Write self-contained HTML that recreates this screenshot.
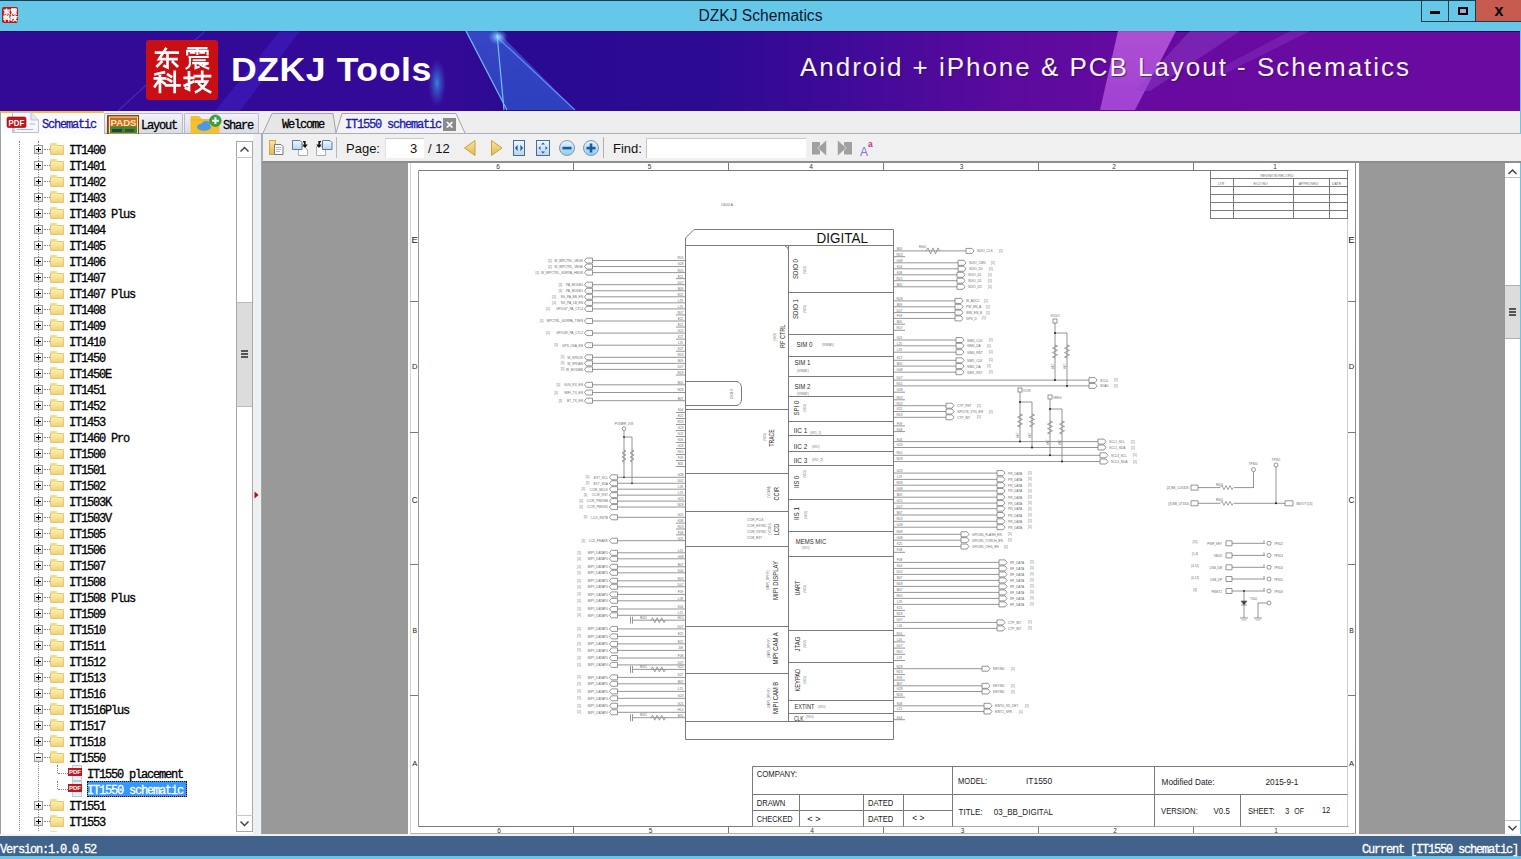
<!DOCTYPE html><html><head><meta charset="utf-8"><style>
*{margin:0;padding:0;box-sizing:border-box}
html,body{width:1521px;height:859px;overflow:hidden;background:#65c8e8;font-family:"Liberation Sans",sans-serif;position:relative}
.a{position:absolute}
.mono{font-family:"Liberation Mono",monospace;font-size:12px;-webkit-text-stroke:0.3px currentColor;letter-spacing:-1.2px;line-height:16px;color:#000;white-space:pre}
</style></head><body>
<div class="a" style="left:0;top:0;width:1521px;height:1px;background:#1d3b48"></div>
<div class="a" style="left:0;top:7px;width:1521px;text-align:center;font-size:15.6px;line-height:18px;color:#0a1830">DZKJ Schematics</div>
<div class="a" style="left:1421px;top:0;width:28px;height:22px;border:1px solid #1d3b48;border-top:0"></div>
<div class="a" style="left:1449px;top:0;width:27px;height:22px;border:1px solid #1d3b48;border-top:0;border-left:0"></div>
<div class="a" style="left:1476px;top:0;width:45px;height:22px;background:#c75b4f;border-bottom:1px solid #1d3b48"></div>
<div class="a" style="left:1430px;top:11px;width:10px;height:3px;background:#000"></div>
<div class="a" style="left:1458px;top:7px;width:10px;height:8px;border:2px solid #000;background:#9ad"></div>
<div class="a" style="left:1489px;top:1px;width:20px;font-size:16px;font-weight:bold;line-height:20px;text-align:center;color:#000">x</div>
<svg class="a" style="left:2px;top:7px" width="16" height="16"><rect x="0" y="0" width="16" height="16" rx="2" fill="#c01818"/><path transform="translate(1.20,1.50) scale(0.3,0.26)" d="M3,6 H21 M11,2 L5.5,13 H20 M12.5,9 V22 L10,20.5 M7.5,16 L4,20.5 M17,16 L20.5,20.5" stroke="#fff" stroke-width="1.30" vector-effect="non-scaling-stroke" fill="none" stroke-linecap="square"/><path transform="translate(8.20,1.50) scale(0.3,0.26)" d="M4.5,1.2 H19.5 M12,1.2 V7.5 M3.5,4.2 V8 M3.5,4.2 H20.5 V8 M6.5,6.2 H9.5 M14.5,6.2 H17.5 M5.5,10.8 H20.5 M5.8,10.8 V18.5 Q5.5,21.5 3,23 M9,14.2 H18 M8.5,17.4 H20.5 M10.5,17.4 V22.8 L13,21.5 M13.5,18 Q16.5,21.5 21,23 M17.5,19.5 L20.5,18" stroke="#fff" stroke-width="1.04" vector-effect="non-scaling-stroke" fill="none" stroke-linecap="square"/><path transform="translate(1.20,8.00) scale(0.3,0.26)" d="M2.5,4 L9.5,2 M2,8.5 H10.5 M6.2,3 V23 M6,9.5 L2,17 M6.5,10.5 L10,14 M13,4.5 L15.5,6.5 M13,9.5 L15.5,11.5 M11.5,16 H22.5 M18.5,1.5 V23" stroke="#fff" stroke-width="1.30" vector-effect="non-scaling-stroke" fill="none" stroke-linecap="square"/><path transform="translate(8.20,8.00) scale(0.3,0.26)" d="M1.5,8 H8.5 M5,2 V20.5 L2.5,19 M1.5,16 L8.5,12 M10,6 H22.5 M16,1.5 V11 M11,12 H20 Q17,19 11,23 M13.5,14.5 Q17,20 22.5,23" stroke="#fff" stroke-width="1.30" vector-effect="non-scaling-stroke" fill="none" stroke-linecap="square"/></svg>
<div class="a" style="left:0;top:31px;width:1520px;height:80px;overflow:hidden;background:linear-gradient(90deg,#330a96 0%,#330a97 29%,#2b0a93 34%,#2c0a92 46%,#3e0a98 55%,#5a0a9e 66%,#680aa0 76%,#6a0aa0 100%)">
<svg width="1520" height="80" style="position:absolute;left:0;top:0">
<defs>
<linearGradient id="ray1" x1="0" x2="0" y1="0" y2="1"><stop offset="0" stop-color="#3a6ae0"/><stop offset="1" stop-color="#3060d8"/></linearGradient>
<radialGradient id="glow1"><stop offset="0" stop-color="#9ff0ff" stop-opacity="0.9"/><stop offset="1" stop-color="#60a0ff" stop-opacity="0"/></radialGradient>
<radialGradient id="glow2"><stop offset="0" stop-color="#3aa0e8" stop-opacity="0.8"/><stop offset="1" stop-color="#3a60e0" stop-opacity="0"/></radialGradient>
<linearGradient id="ray2" x1="0" x2="0" y1="0" y2="1"><stop offset="0" stop-color="#c060e0"/><stop offset="1" stop-color="#b050e0"/></linearGradient>
</defs>
<rect x="0" y="0" width="1520" height="1" fill="#180858"/>
<polyline points="118,80 205,0" stroke="#5a4ae0" stroke-width="1.2" opacity="0.45" fill="none"/>
<polygon points="215,80 280,0 300,0 240,80" fill="#4a2ae0" opacity="0.35"/>
<polygon points="466,0 497,0 575,79 508,79" fill="url(#ray1)" opacity="0.62"/>
<polyline points="466,0 507,79" stroke="#70b8ff" stroke-width="1.3" fill="none"/>
<polyline points="497,3 504,79" stroke="#70c0ff" stroke-width="1.2" fill="none"/>
<polyline points="497,6 575,79" stroke="#6a8cff" stroke-width="1.1" fill="none"/>
<ellipse cx="498" cy="6" rx="10" ry="8" fill="url(#glow1)"/>
<ellipse cx="437" cy="52" rx="9" ry="24" fill="url(#glow2)"/>
<polygon points="1118,0 1176,0 1135,79 1100,79" fill="url(#ray2)" opacity="0.8"/>
<polygon points="1190,0 1240,0 1150,60 1135,60" fill="#9040c8" opacity="0.45"/>
<polygon points="1290,0 1310,0 1220,45 1205,45" fill="#9040c8" opacity="0.35"/>
</svg>
<svg class="a" style="left:146px;top:9px" width="72" height="60"><rect x="0" y="0" width="72" height="60" rx="3" fill="#c90f14"/><path transform="translate(6.50,7.00) scale(1.2,0.93)" d="M3,6 H21 M11,2 L5.5,13 H20 M12.5,9 V22 L10,20.5 M7.5,16 L4,20.5 M17,16 L20.5,20.5" stroke="#fff" stroke-width="2.70" vector-effect="non-scaling-stroke" fill="none" stroke-linecap="square"/><path transform="translate(37.00,7.00) scale(1.2,0.93)" d="M4.5,1.2 H19.5 M12,1.2 V7.5 M3.5,4.2 V8 M3.5,4.2 H20.5 V8 M6.5,6.2 H9.5 M14.5,6.2 H17.5 M5.5,10.8 H20.5 M5.8,10.8 V18.5 Q5.5,21.5 3,23 M9,14.2 H18 M8.5,17.4 H20.5 M10.5,17.4 V22.8 L13,21.5 M13.5,18 Q16.5,21.5 21,23 M17.5,19.5 L20.5,18" stroke="#fff" stroke-width="2.16" vector-effect="non-scaling-stroke" fill="none" stroke-linecap="square"/><path transform="translate(6.50,30.50) scale(1.2,0.93)" d="M2.5,4 L9.5,2 M2,8.5 H10.5 M6.2,3 V23 M6,9.5 L2,17 M6.5,10.5 L10,14 M13,4.5 L15.5,6.5 M13,9.5 L15.5,11.5 M11.5,16 H22.5 M18.5,1.5 V23" stroke="#fff" stroke-width="2.70" vector-effect="non-scaling-stroke" fill="none" stroke-linecap="square"/><path transform="translate(37.00,30.50) scale(1.2,0.93)" d="M1.5,8 H8.5 M5,2 V20.5 L2.5,19 M1.5,16 L8.5,12 M10,6 H22.5 M16,1.5 V11 M11,12 H20 Q17,19 11,23 M13.5,14.5 Q17,20 22.5,23" stroke="#fff" stroke-width="2.70" vector-effect="non-scaling-stroke" fill="none" stroke-linecap="square"/></svg>
<div class="a" style="left:230.5px;top:21px;font-size:33px;font-weight:bold;color:#fff;line-height:36px;letter-spacing:0.5px;transform:scaleX(1.08);transform-origin:0 0">DZKJ Tools</div>
<div class="a" style="left:800px;top:20px;font-size:26px;color:#f6f2ff;line-height:32px;letter-spacing:1.97px;text-shadow:1px 1px 1px rgba(40,20,70,0.7)">Android + iPhone &amp; PCB Layout - Schematics</div>
</div>
<div class="a" style="left:0;top:111px;width:1520px;height:22px;background:#eeeeee"></div>
<div class="a" style="left:0;top:133px;width:1520px;height:1px;background:#a8b0bc"></div>
<div class="a" style="left:0;top:111px;width:104px;height:23px;background:#fbfbfd;border-top:2px solid #f3bf3f;border-left:1px solid #9aa"></div>
<div class="a mono" style="left:42px;top:117px;color:#1a1aa0">Schematic</div>
<div class="a" style="left:104px;top:113px;width:79px;height:20px;background:linear-gradient(#f2f3f7,#d9dce6);border:1px solid #b8bcc8;border-bottom:0;border-radius:2px 2px 0 0"></div>
<div class="a mono" style="left:141px;top:118px">Layout</div>
<div class="a" style="left:184px;top:113px;width:75px;height:20px;background:linear-gradient(#f2f3f7,#d9dce6);border:1px solid #b8bcc8;border-bottom:0;border-radius:2px 2px 0 0"></div>
<div class="a mono" style="left:223px;top:118px">Share</div>
<svg class="a" style="left:0;top:110px" width="262" height="24">
<path d="M12.5,2.5 H31 L38.5,10 V22.5 H12.5 Z" fill="#f4f8fc" stroke="#b8c4d0"/>
<path d="M31,2.5 V10 H38.5" fill="#e0e8f0" stroke="#b8c4d0"/>
<path d="M17,19.5 H33 M30,14 H35 M14,22 V12" stroke="#a8bccc" stroke-width="1.2"/>
<rect x="7" y="7" width="19" height="10.5" rx="1.5" fill="#c4141c" stroke="#8a0a10" stroke-width="0.6"/>
<text x="8.6" y="15.6" font-size="8.6" font-weight="bold" fill="#fff" font-family="Liberation Sans" textLength="15.6" lengthAdjust="spacingAndGlyphs">PDF</text>
<rect x="107.5" y="5.5" width="31" height="18" fill="#b0561a" stroke="#8a4010"/>
<rect x="109.5" y="7" width="28" height="16" fill="#c86a22" stroke="#f6e2a8" stroke-width="1"/>
<text x="110.5" y="15.5" font-size="9" font-weight="bold" fill="#fbe8b0" font-family="Liberation Sans" textLength="26" lengthAdjust="spacingAndGlyphs">PADS</text>
<rect x="110" y="16.5" width="27" height="6.5" fill="#3c8a30"/>
<rect x="112" y="19" width="10" height="3" fill="#244"/><rect x="125" y="19" width="9" height="3" fill="#353"/>
<path d="M190.5,6 H199 L202,9 H219.5 V23.5 H190.5 Z" fill="#f7be2e"/>
<path d="M190.5,10 H219.5" stroke="#f0b020" stroke-width="1"/>
<ellipse cx="204" cy="17" rx="7" ry="3.8" fill="#4a9ae6"/><ellipse cx="206" cy="14.2" rx="4" ry="3.3" fill="#4a9ae6"/>
<circle cx="215.4" cy="10.7" r="5.8" fill="#3aa040" stroke="#2a8030" stroke-width="0.6"/>
<path d="M215.4,7.3 V14.1 M212,10.7 H218.8" stroke="#fff" stroke-width="2"/>
</svg>
<svg class="a" style="left:262px;top:111px" width="220" height="23">
<path d="M1,22 L10,2.5 L71,2.5 L74,22" fill="#e6e6e6" stroke="#a0a4ac"/>
<path d="M74,22 L80,2.5 L194,2.5 L203,22" fill="#f3f3f3" stroke="#a0a4ac"/>
</svg>
<div class="a mono" style="left:282px;top:117px">Welcome</div>
<div class="a mono" style="left:345px;top:117px;color:#1a1ab0">IT1550 schematic</div>
<div class="a" style="left:443px;top:118px;width:13px;height:13px;background:#8a8a8a;color:#fff;font-size:13px;line-height:13px;text-align:center;font-weight:bold">&#215;</div>
<div class="a" style="left:0;top:134px;width:262px;height:702px;background:#fff;border-left:1px solid #9aa0a8"></div>
<div class="a" style="left:253px;top:134px;width:8px;height:702px;background:#eef0f2"></div>
<div class="a" style="left:261px;top:134px;width:1px;height:702px;background:#a0a8b0"></div>
<div class="a" style="left:0;top:134px;width:236px;height:698px;overflow:hidden">
<div class="a" style="left:19px;top:7px;width:1px;height:700px;border-left:1px dotted #808080"></div>
<div class="a" style="left:38px;top:7px;width:1px;height:700px;border-left:1px dotted #808080"></div>
<div class="a" style="left:34px;top:11px;width:9px;height:9px;border:1px solid #9a9a9a;background:linear-gradient(#fff,#ddd)"></div>
<div class="a" style="left:36px;top:15px;width:5px;height:1px;background:#000"></div>
<div class="a" style="left:38px;top:13px;width:1px;height:5px;background:#000"></div>
<div class="a" style="left:44px;top:15px;width:6px;height:1px;border-top:1px dotted #808080"></div>
<div class="a" style="left:50px;top:11px;width:14px;height:10px;background:linear-gradient(#faeeb0,#f2d478);border:1px solid #e8c468;border-radius:1px"></div>
<div class="a" style="left:50px;top:9px;width:7px;height:3px;background:#f3dc90;border-radius:1px 1px 0 0"></div>
<div class="a mono" style="left:69px;top:9px">IT1400</div>
<div class="a" style="left:34px;top:27px;width:9px;height:9px;border:1px solid #9a9a9a;background:linear-gradient(#fff,#ddd)"></div>
<div class="a" style="left:36px;top:31px;width:5px;height:1px;background:#000"></div>
<div class="a" style="left:38px;top:29px;width:1px;height:5px;background:#000"></div>
<div class="a" style="left:44px;top:31px;width:6px;height:1px;border-top:1px dotted #808080"></div>
<div class="a" style="left:50px;top:27px;width:14px;height:10px;background:linear-gradient(#faeeb0,#f2d478);border:1px solid #e8c468;border-radius:1px"></div>
<div class="a" style="left:50px;top:25px;width:7px;height:3px;background:#f3dc90;border-radius:1px 1px 0 0"></div>
<div class="a mono" style="left:69px;top:25px">IT1401</div>
<div class="a" style="left:34px;top:43px;width:9px;height:9px;border:1px solid #9a9a9a;background:linear-gradient(#fff,#ddd)"></div>
<div class="a" style="left:36px;top:47px;width:5px;height:1px;background:#000"></div>
<div class="a" style="left:38px;top:45px;width:1px;height:5px;background:#000"></div>
<div class="a" style="left:44px;top:47px;width:6px;height:1px;border-top:1px dotted #808080"></div>
<div class="a" style="left:50px;top:43px;width:14px;height:10px;background:linear-gradient(#faeeb0,#f2d478);border:1px solid #e8c468;border-radius:1px"></div>
<div class="a" style="left:50px;top:41px;width:7px;height:3px;background:#f3dc90;border-radius:1px 1px 0 0"></div>
<div class="a mono" style="left:69px;top:41px">IT1402</div>
<div class="a" style="left:34px;top:59px;width:9px;height:9px;border:1px solid #9a9a9a;background:linear-gradient(#fff,#ddd)"></div>
<div class="a" style="left:36px;top:63px;width:5px;height:1px;background:#000"></div>
<div class="a" style="left:38px;top:61px;width:1px;height:5px;background:#000"></div>
<div class="a" style="left:44px;top:63px;width:6px;height:1px;border-top:1px dotted #808080"></div>
<div class="a" style="left:50px;top:59px;width:14px;height:10px;background:linear-gradient(#faeeb0,#f2d478);border:1px solid #e8c468;border-radius:1px"></div>
<div class="a" style="left:50px;top:57px;width:7px;height:3px;background:#f3dc90;border-radius:1px 1px 0 0"></div>
<div class="a mono" style="left:69px;top:57px">IT1403</div>
<div class="a" style="left:34px;top:75px;width:9px;height:9px;border:1px solid #9a9a9a;background:linear-gradient(#fff,#ddd)"></div>
<div class="a" style="left:36px;top:79px;width:5px;height:1px;background:#000"></div>
<div class="a" style="left:38px;top:77px;width:1px;height:5px;background:#000"></div>
<div class="a" style="left:44px;top:79px;width:6px;height:1px;border-top:1px dotted #808080"></div>
<div class="a" style="left:50px;top:75px;width:14px;height:10px;background:linear-gradient(#faeeb0,#f2d478);border:1px solid #e8c468;border-radius:1px"></div>
<div class="a" style="left:50px;top:73px;width:7px;height:3px;background:#f3dc90;border-radius:1px 1px 0 0"></div>
<div class="a mono" style="left:69px;top:73px">IT1403 Plus</div>
<div class="a" style="left:34px;top:91px;width:9px;height:9px;border:1px solid #9a9a9a;background:linear-gradient(#fff,#ddd)"></div>
<div class="a" style="left:36px;top:95px;width:5px;height:1px;background:#000"></div>
<div class="a" style="left:38px;top:93px;width:1px;height:5px;background:#000"></div>
<div class="a" style="left:44px;top:95px;width:6px;height:1px;border-top:1px dotted #808080"></div>
<div class="a" style="left:50px;top:91px;width:14px;height:10px;background:linear-gradient(#faeeb0,#f2d478);border:1px solid #e8c468;border-radius:1px"></div>
<div class="a" style="left:50px;top:89px;width:7px;height:3px;background:#f3dc90;border-radius:1px 1px 0 0"></div>
<div class="a mono" style="left:69px;top:89px">IT1404</div>
<div class="a" style="left:34px;top:107px;width:9px;height:9px;border:1px solid #9a9a9a;background:linear-gradient(#fff,#ddd)"></div>
<div class="a" style="left:36px;top:111px;width:5px;height:1px;background:#000"></div>
<div class="a" style="left:38px;top:109px;width:1px;height:5px;background:#000"></div>
<div class="a" style="left:44px;top:111px;width:6px;height:1px;border-top:1px dotted #808080"></div>
<div class="a" style="left:50px;top:107px;width:14px;height:10px;background:linear-gradient(#faeeb0,#f2d478);border:1px solid #e8c468;border-radius:1px"></div>
<div class="a" style="left:50px;top:105px;width:7px;height:3px;background:#f3dc90;border-radius:1px 1px 0 0"></div>
<div class="a mono" style="left:69px;top:105px">IT1405</div>
<div class="a" style="left:34px;top:123px;width:9px;height:9px;border:1px solid #9a9a9a;background:linear-gradient(#fff,#ddd)"></div>
<div class="a" style="left:36px;top:127px;width:5px;height:1px;background:#000"></div>
<div class="a" style="left:38px;top:125px;width:1px;height:5px;background:#000"></div>
<div class="a" style="left:44px;top:127px;width:6px;height:1px;border-top:1px dotted #808080"></div>
<div class="a" style="left:50px;top:123px;width:14px;height:10px;background:linear-gradient(#faeeb0,#f2d478);border:1px solid #e8c468;border-radius:1px"></div>
<div class="a" style="left:50px;top:121px;width:7px;height:3px;background:#f3dc90;border-radius:1px 1px 0 0"></div>
<div class="a mono" style="left:69px;top:121px">IT1406</div>
<div class="a" style="left:34px;top:139px;width:9px;height:9px;border:1px solid #9a9a9a;background:linear-gradient(#fff,#ddd)"></div>
<div class="a" style="left:36px;top:143px;width:5px;height:1px;background:#000"></div>
<div class="a" style="left:38px;top:141px;width:1px;height:5px;background:#000"></div>
<div class="a" style="left:44px;top:143px;width:6px;height:1px;border-top:1px dotted #808080"></div>
<div class="a" style="left:50px;top:139px;width:14px;height:10px;background:linear-gradient(#faeeb0,#f2d478);border:1px solid #e8c468;border-radius:1px"></div>
<div class="a" style="left:50px;top:137px;width:7px;height:3px;background:#f3dc90;border-radius:1px 1px 0 0"></div>
<div class="a mono" style="left:69px;top:137px">IT1407</div>
<div class="a" style="left:34px;top:155px;width:9px;height:9px;border:1px solid #9a9a9a;background:linear-gradient(#fff,#ddd)"></div>
<div class="a" style="left:36px;top:159px;width:5px;height:1px;background:#000"></div>
<div class="a" style="left:38px;top:157px;width:1px;height:5px;background:#000"></div>
<div class="a" style="left:44px;top:159px;width:6px;height:1px;border-top:1px dotted #808080"></div>
<div class="a" style="left:50px;top:155px;width:14px;height:10px;background:linear-gradient(#faeeb0,#f2d478);border:1px solid #e8c468;border-radius:1px"></div>
<div class="a" style="left:50px;top:153px;width:7px;height:3px;background:#f3dc90;border-radius:1px 1px 0 0"></div>
<div class="a mono" style="left:69px;top:153px">IT1407 Plus</div>
<div class="a" style="left:34px;top:171px;width:9px;height:9px;border:1px solid #9a9a9a;background:linear-gradient(#fff,#ddd)"></div>
<div class="a" style="left:36px;top:175px;width:5px;height:1px;background:#000"></div>
<div class="a" style="left:38px;top:173px;width:1px;height:5px;background:#000"></div>
<div class="a" style="left:44px;top:175px;width:6px;height:1px;border-top:1px dotted #808080"></div>
<div class="a" style="left:50px;top:171px;width:14px;height:10px;background:linear-gradient(#faeeb0,#f2d478);border:1px solid #e8c468;border-radius:1px"></div>
<div class="a" style="left:50px;top:169px;width:7px;height:3px;background:#f3dc90;border-radius:1px 1px 0 0"></div>
<div class="a mono" style="left:69px;top:169px">IT1408</div>
<div class="a" style="left:34px;top:187px;width:9px;height:9px;border:1px solid #9a9a9a;background:linear-gradient(#fff,#ddd)"></div>
<div class="a" style="left:36px;top:191px;width:5px;height:1px;background:#000"></div>
<div class="a" style="left:38px;top:189px;width:1px;height:5px;background:#000"></div>
<div class="a" style="left:44px;top:191px;width:6px;height:1px;border-top:1px dotted #808080"></div>
<div class="a" style="left:50px;top:187px;width:14px;height:10px;background:linear-gradient(#faeeb0,#f2d478);border:1px solid #e8c468;border-radius:1px"></div>
<div class="a" style="left:50px;top:185px;width:7px;height:3px;background:#f3dc90;border-radius:1px 1px 0 0"></div>
<div class="a mono" style="left:69px;top:185px">IT1409</div>
<div class="a" style="left:34px;top:203px;width:9px;height:9px;border:1px solid #9a9a9a;background:linear-gradient(#fff,#ddd)"></div>
<div class="a" style="left:36px;top:207px;width:5px;height:1px;background:#000"></div>
<div class="a" style="left:38px;top:205px;width:1px;height:5px;background:#000"></div>
<div class="a" style="left:44px;top:207px;width:6px;height:1px;border-top:1px dotted #808080"></div>
<div class="a" style="left:50px;top:203px;width:14px;height:10px;background:linear-gradient(#faeeb0,#f2d478);border:1px solid #e8c468;border-radius:1px"></div>
<div class="a" style="left:50px;top:201px;width:7px;height:3px;background:#f3dc90;border-radius:1px 1px 0 0"></div>
<div class="a mono" style="left:69px;top:201px">IT1410</div>
<div class="a" style="left:34px;top:219px;width:9px;height:9px;border:1px solid #9a9a9a;background:linear-gradient(#fff,#ddd)"></div>
<div class="a" style="left:36px;top:223px;width:5px;height:1px;background:#000"></div>
<div class="a" style="left:38px;top:221px;width:1px;height:5px;background:#000"></div>
<div class="a" style="left:44px;top:223px;width:6px;height:1px;border-top:1px dotted #808080"></div>
<div class="a" style="left:50px;top:219px;width:14px;height:10px;background:linear-gradient(#faeeb0,#f2d478);border:1px solid #e8c468;border-radius:1px"></div>
<div class="a" style="left:50px;top:217px;width:7px;height:3px;background:#f3dc90;border-radius:1px 1px 0 0"></div>
<div class="a mono" style="left:69px;top:217px">IT1450</div>
<div class="a" style="left:34px;top:235px;width:9px;height:9px;border:1px solid #9a9a9a;background:linear-gradient(#fff,#ddd)"></div>
<div class="a" style="left:36px;top:239px;width:5px;height:1px;background:#000"></div>
<div class="a" style="left:38px;top:237px;width:1px;height:5px;background:#000"></div>
<div class="a" style="left:44px;top:239px;width:6px;height:1px;border-top:1px dotted #808080"></div>
<div class="a" style="left:50px;top:235px;width:14px;height:10px;background:linear-gradient(#faeeb0,#f2d478);border:1px solid #e8c468;border-radius:1px"></div>
<div class="a" style="left:50px;top:233px;width:7px;height:3px;background:#f3dc90;border-radius:1px 1px 0 0"></div>
<div class="a mono" style="left:69px;top:233px">IT1450E</div>
<div class="a" style="left:34px;top:251px;width:9px;height:9px;border:1px solid #9a9a9a;background:linear-gradient(#fff,#ddd)"></div>
<div class="a" style="left:36px;top:255px;width:5px;height:1px;background:#000"></div>
<div class="a" style="left:38px;top:253px;width:1px;height:5px;background:#000"></div>
<div class="a" style="left:44px;top:255px;width:6px;height:1px;border-top:1px dotted #808080"></div>
<div class="a" style="left:50px;top:251px;width:14px;height:10px;background:linear-gradient(#faeeb0,#f2d478);border:1px solid #e8c468;border-radius:1px"></div>
<div class="a" style="left:50px;top:249px;width:7px;height:3px;background:#f3dc90;border-radius:1px 1px 0 0"></div>
<div class="a mono" style="left:69px;top:249px">IT1451</div>
<div class="a" style="left:34px;top:267px;width:9px;height:9px;border:1px solid #9a9a9a;background:linear-gradient(#fff,#ddd)"></div>
<div class="a" style="left:36px;top:271px;width:5px;height:1px;background:#000"></div>
<div class="a" style="left:38px;top:269px;width:1px;height:5px;background:#000"></div>
<div class="a" style="left:44px;top:271px;width:6px;height:1px;border-top:1px dotted #808080"></div>
<div class="a" style="left:50px;top:267px;width:14px;height:10px;background:linear-gradient(#faeeb0,#f2d478);border:1px solid #e8c468;border-radius:1px"></div>
<div class="a" style="left:50px;top:265px;width:7px;height:3px;background:#f3dc90;border-radius:1px 1px 0 0"></div>
<div class="a mono" style="left:69px;top:265px">IT1452</div>
<div class="a" style="left:34px;top:283px;width:9px;height:9px;border:1px solid #9a9a9a;background:linear-gradient(#fff,#ddd)"></div>
<div class="a" style="left:36px;top:287px;width:5px;height:1px;background:#000"></div>
<div class="a" style="left:38px;top:285px;width:1px;height:5px;background:#000"></div>
<div class="a" style="left:44px;top:287px;width:6px;height:1px;border-top:1px dotted #808080"></div>
<div class="a" style="left:50px;top:283px;width:14px;height:10px;background:linear-gradient(#faeeb0,#f2d478);border:1px solid #e8c468;border-radius:1px"></div>
<div class="a" style="left:50px;top:281px;width:7px;height:3px;background:#f3dc90;border-radius:1px 1px 0 0"></div>
<div class="a mono" style="left:69px;top:281px">IT1453</div>
<div class="a" style="left:34px;top:299px;width:9px;height:9px;border:1px solid #9a9a9a;background:linear-gradient(#fff,#ddd)"></div>
<div class="a" style="left:36px;top:303px;width:5px;height:1px;background:#000"></div>
<div class="a" style="left:38px;top:301px;width:1px;height:5px;background:#000"></div>
<div class="a" style="left:44px;top:303px;width:6px;height:1px;border-top:1px dotted #808080"></div>
<div class="a" style="left:50px;top:299px;width:14px;height:10px;background:linear-gradient(#faeeb0,#f2d478);border:1px solid #e8c468;border-radius:1px"></div>
<div class="a" style="left:50px;top:297px;width:7px;height:3px;background:#f3dc90;border-radius:1px 1px 0 0"></div>
<div class="a mono" style="left:69px;top:297px">IT1460 Pro</div>
<div class="a" style="left:34px;top:315px;width:9px;height:9px;border:1px solid #9a9a9a;background:linear-gradient(#fff,#ddd)"></div>
<div class="a" style="left:36px;top:319px;width:5px;height:1px;background:#000"></div>
<div class="a" style="left:38px;top:317px;width:1px;height:5px;background:#000"></div>
<div class="a" style="left:44px;top:319px;width:6px;height:1px;border-top:1px dotted #808080"></div>
<div class="a" style="left:50px;top:315px;width:14px;height:10px;background:linear-gradient(#faeeb0,#f2d478);border:1px solid #e8c468;border-radius:1px"></div>
<div class="a" style="left:50px;top:313px;width:7px;height:3px;background:#f3dc90;border-radius:1px 1px 0 0"></div>
<div class="a mono" style="left:69px;top:313px">IT1500</div>
<div class="a" style="left:34px;top:331px;width:9px;height:9px;border:1px solid #9a9a9a;background:linear-gradient(#fff,#ddd)"></div>
<div class="a" style="left:36px;top:335px;width:5px;height:1px;background:#000"></div>
<div class="a" style="left:38px;top:333px;width:1px;height:5px;background:#000"></div>
<div class="a" style="left:44px;top:335px;width:6px;height:1px;border-top:1px dotted #808080"></div>
<div class="a" style="left:50px;top:331px;width:14px;height:10px;background:linear-gradient(#faeeb0,#f2d478);border:1px solid #e8c468;border-radius:1px"></div>
<div class="a" style="left:50px;top:329px;width:7px;height:3px;background:#f3dc90;border-radius:1px 1px 0 0"></div>
<div class="a mono" style="left:69px;top:329px">IT1501</div>
<div class="a" style="left:34px;top:347px;width:9px;height:9px;border:1px solid #9a9a9a;background:linear-gradient(#fff,#ddd)"></div>
<div class="a" style="left:36px;top:351px;width:5px;height:1px;background:#000"></div>
<div class="a" style="left:38px;top:349px;width:1px;height:5px;background:#000"></div>
<div class="a" style="left:44px;top:351px;width:6px;height:1px;border-top:1px dotted #808080"></div>
<div class="a" style="left:50px;top:347px;width:14px;height:10px;background:linear-gradient(#faeeb0,#f2d478);border:1px solid #e8c468;border-radius:1px"></div>
<div class="a" style="left:50px;top:345px;width:7px;height:3px;background:#f3dc90;border-radius:1px 1px 0 0"></div>
<div class="a mono" style="left:69px;top:345px">IT1502</div>
<div class="a" style="left:34px;top:363px;width:9px;height:9px;border:1px solid #9a9a9a;background:linear-gradient(#fff,#ddd)"></div>
<div class="a" style="left:36px;top:367px;width:5px;height:1px;background:#000"></div>
<div class="a" style="left:38px;top:365px;width:1px;height:5px;background:#000"></div>
<div class="a" style="left:44px;top:367px;width:6px;height:1px;border-top:1px dotted #808080"></div>
<div class="a" style="left:50px;top:363px;width:14px;height:10px;background:linear-gradient(#faeeb0,#f2d478);border:1px solid #e8c468;border-radius:1px"></div>
<div class="a" style="left:50px;top:361px;width:7px;height:3px;background:#f3dc90;border-radius:1px 1px 0 0"></div>
<div class="a mono" style="left:69px;top:361px">IT1503K</div>
<div class="a" style="left:34px;top:379px;width:9px;height:9px;border:1px solid #9a9a9a;background:linear-gradient(#fff,#ddd)"></div>
<div class="a" style="left:36px;top:383px;width:5px;height:1px;background:#000"></div>
<div class="a" style="left:38px;top:381px;width:1px;height:5px;background:#000"></div>
<div class="a" style="left:44px;top:383px;width:6px;height:1px;border-top:1px dotted #808080"></div>
<div class="a" style="left:50px;top:379px;width:14px;height:10px;background:linear-gradient(#faeeb0,#f2d478);border:1px solid #e8c468;border-radius:1px"></div>
<div class="a" style="left:50px;top:377px;width:7px;height:3px;background:#f3dc90;border-radius:1px 1px 0 0"></div>
<div class="a mono" style="left:69px;top:377px">IT1503V</div>
<div class="a" style="left:34px;top:395px;width:9px;height:9px;border:1px solid #9a9a9a;background:linear-gradient(#fff,#ddd)"></div>
<div class="a" style="left:36px;top:399px;width:5px;height:1px;background:#000"></div>
<div class="a" style="left:38px;top:397px;width:1px;height:5px;background:#000"></div>
<div class="a" style="left:44px;top:399px;width:6px;height:1px;border-top:1px dotted #808080"></div>
<div class="a" style="left:50px;top:395px;width:14px;height:10px;background:linear-gradient(#faeeb0,#f2d478);border:1px solid #e8c468;border-radius:1px"></div>
<div class="a" style="left:50px;top:393px;width:7px;height:3px;background:#f3dc90;border-radius:1px 1px 0 0"></div>
<div class="a mono" style="left:69px;top:393px">IT1505</div>
<div class="a" style="left:34px;top:411px;width:9px;height:9px;border:1px solid #9a9a9a;background:linear-gradient(#fff,#ddd)"></div>
<div class="a" style="left:36px;top:415px;width:5px;height:1px;background:#000"></div>
<div class="a" style="left:38px;top:413px;width:1px;height:5px;background:#000"></div>
<div class="a" style="left:44px;top:415px;width:6px;height:1px;border-top:1px dotted #808080"></div>
<div class="a" style="left:50px;top:411px;width:14px;height:10px;background:linear-gradient(#faeeb0,#f2d478);border:1px solid #e8c468;border-radius:1px"></div>
<div class="a" style="left:50px;top:409px;width:7px;height:3px;background:#f3dc90;border-radius:1px 1px 0 0"></div>
<div class="a mono" style="left:69px;top:409px">IT1506</div>
<div class="a" style="left:34px;top:427px;width:9px;height:9px;border:1px solid #9a9a9a;background:linear-gradient(#fff,#ddd)"></div>
<div class="a" style="left:36px;top:431px;width:5px;height:1px;background:#000"></div>
<div class="a" style="left:38px;top:429px;width:1px;height:5px;background:#000"></div>
<div class="a" style="left:44px;top:431px;width:6px;height:1px;border-top:1px dotted #808080"></div>
<div class="a" style="left:50px;top:427px;width:14px;height:10px;background:linear-gradient(#faeeb0,#f2d478);border:1px solid #e8c468;border-radius:1px"></div>
<div class="a" style="left:50px;top:425px;width:7px;height:3px;background:#f3dc90;border-radius:1px 1px 0 0"></div>
<div class="a mono" style="left:69px;top:425px">IT1507</div>
<div class="a" style="left:34px;top:443px;width:9px;height:9px;border:1px solid #9a9a9a;background:linear-gradient(#fff,#ddd)"></div>
<div class="a" style="left:36px;top:447px;width:5px;height:1px;background:#000"></div>
<div class="a" style="left:38px;top:445px;width:1px;height:5px;background:#000"></div>
<div class="a" style="left:44px;top:447px;width:6px;height:1px;border-top:1px dotted #808080"></div>
<div class="a" style="left:50px;top:443px;width:14px;height:10px;background:linear-gradient(#faeeb0,#f2d478);border:1px solid #e8c468;border-radius:1px"></div>
<div class="a" style="left:50px;top:441px;width:7px;height:3px;background:#f3dc90;border-radius:1px 1px 0 0"></div>
<div class="a mono" style="left:69px;top:441px">IT1508</div>
<div class="a" style="left:34px;top:459px;width:9px;height:9px;border:1px solid #9a9a9a;background:linear-gradient(#fff,#ddd)"></div>
<div class="a" style="left:36px;top:463px;width:5px;height:1px;background:#000"></div>
<div class="a" style="left:38px;top:461px;width:1px;height:5px;background:#000"></div>
<div class="a" style="left:44px;top:463px;width:6px;height:1px;border-top:1px dotted #808080"></div>
<div class="a" style="left:50px;top:459px;width:14px;height:10px;background:linear-gradient(#faeeb0,#f2d478);border:1px solid #e8c468;border-radius:1px"></div>
<div class="a" style="left:50px;top:457px;width:7px;height:3px;background:#f3dc90;border-radius:1px 1px 0 0"></div>
<div class="a mono" style="left:69px;top:457px">IT1508 Plus</div>
<div class="a" style="left:34px;top:475px;width:9px;height:9px;border:1px solid #9a9a9a;background:linear-gradient(#fff,#ddd)"></div>
<div class="a" style="left:36px;top:479px;width:5px;height:1px;background:#000"></div>
<div class="a" style="left:38px;top:477px;width:1px;height:5px;background:#000"></div>
<div class="a" style="left:44px;top:479px;width:6px;height:1px;border-top:1px dotted #808080"></div>
<div class="a" style="left:50px;top:475px;width:14px;height:10px;background:linear-gradient(#faeeb0,#f2d478);border:1px solid #e8c468;border-radius:1px"></div>
<div class="a" style="left:50px;top:473px;width:7px;height:3px;background:#f3dc90;border-radius:1px 1px 0 0"></div>
<div class="a mono" style="left:69px;top:473px">IT1509</div>
<div class="a" style="left:34px;top:491px;width:9px;height:9px;border:1px solid #9a9a9a;background:linear-gradient(#fff,#ddd)"></div>
<div class="a" style="left:36px;top:495px;width:5px;height:1px;background:#000"></div>
<div class="a" style="left:38px;top:493px;width:1px;height:5px;background:#000"></div>
<div class="a" style="left:44px;top:495px;width:6px;height:1px;border-top:1px dotted #808080"></div>
<div class="a" style="left:50px;top:491px;width:14px;height:10px;background:linear-gradient(#faeeb0,#f2d478);border:1px solid #e8c468;border-radius:1px"></div>
<div class="a" style="left:50px;top:489px;width:7px;height:3px;background:#f3dc90;border-radius:1px 1px 0 0"></div>
<div class="a mono" style="left:69px;top:489px">IT1510</div>
<div class="a" style="left:34px;top:507px;width:9px;height:9px;border:1px solid #9a9a9a;background:linear-gradient(#fff,#ddd)"></div>
<div class="a" style="left:36px;top:511px;width:5px;height:1px;background:#000"></div>
<div class="a" style="left:38px;top:509px;width:1px;height:5px;background:#000"></div>
<div class="a" style="left:44px;top:511px;width:6px;height:1px;border-top:1px dotted #808080"></div>
<div class="a" style="left:50px;top:507px;width:14px;height:10px;background:linear-gradient(#faeeb0,#f2d478);border:1px solid #e8c468;border-radius:1px"></div>
<div class="a" style="left:50px;top:505px;width:7px;height:3px;background:#f3dc90;border-radius:1px 1px 0 0"></div>
<div class="a mono" style="left:69px;top:505px">IT1511</div>
<div class="a" style="left:34px;top:523px;width:9px;height:9px;border:1px solid #9a9a9a;background:linear-gradient(#fff,#ddd)"></div>
<div class="a" style="left:36px;top:527px;width:5px;height:1px;background:#000"></div>
<div class="a" style="left:38px;top:525px;width:1px;height:5px;background:#000"></div>
<div class="a" style="left:44px;top:527px;width:6px;height:1px;border-top:1px dotted #808080"></div>
<div class="a" style="left:50px;top:523px;width:14px;height:10px;background:linear-gradient(#faeeb0,#f2d478);border:1px solid #e8c468;border-radius:1px"></div>
<div class="a" style="left:50px;top:521px;width:7px;height:3px;background:#f3dc90;border-radius:1px 1px 0 0"></div>
<div class="a mono" style="left:69px;top:521px">IT1512</div>
<div class="a" style="left:34px;top:539px;width:9px;height:9px;border:1px solid #9a9a9a;background:linear-gradient(#fff,#ddd)"></div>
<div class="a" style="left:36px;top:543px;width:5px;height:1px;background:#000"></div>
<div class="a" style="left:38px;top:541px;width:1px;height:5px;background:#000"></div>
<div class="a" style="left:44px;top:543px;width:6px;height:1px;border-top:1px dotted #808080"></div>
<div class="a" style="left:50px;top:539px;width:14px;height:10px;background:linear-gradient(#faeeb0,#f2d478);border:1px solid #e8c468;border-radius:1px"></div>
<div class="a" style="left:50px;top:537px;width:7px;height:3px;background:#f3dc90;border-radius:1px 1px 0 0"></div>
<div class="a mono" style="left:69px;top:537px">IT1513</div>
<div class="a" style="left:34px;top:555px;width:9px;height:9px;border:1px solid #9a9a9a;background:linear-gradient(#fff,#ddd)"></div>
<div class="a" style="left:36px;top:559px;width:5px;height:1px;background:#000"></div>
<div class="a" style="left:38px;top:557px;width:1px;height:5px;background:#000"></div>
<div class="a" style="left:44px;top:559px;width:6px;height:1px;border-top:1px dotted #808080"></div>
<div class="a" style="left:50px;top:555px;width:14px;height:10px;background:linear-gradient(#faeeb0,#f2d478);border:1px solid #e8c468;border-radius:1px"></div>
<div class="a" style="left:50px;top:553px;width:7px;height:3px;background:#f3dc90;border-radius:1px 1px 0 0"></div>
<div class="a mono" style="left:69px;top:553px">IT1516</div>
<div class="a" style="left:34px;top:571px;width:9px;height:9px;border:1px solid #9a9a9a;background:linear-gradient(#fff,#ddd)"></div>
<div class="a" style="left:36px;top:575px;width:5px;height:1px;background:#000"></div>
<div class="a" style="left:38px;top:573px;width:1px;height:5px;background:#000"></div>
<div class="a" style="left:44px;top:575px;width:6px;height:1px;border-top:1px dotted #808080"></div>
<div class="a" style="left:50px;top:571px;width:14px;height:10px;background:linear-gradient(#faeeb0,#f2d478);border:1px solid #e8c468;border-radius:1px"></div>
<div class="a" style="left:50px;top:569px;width:7px;height:3px;background:#f3dc90;border-radius:1px 1px 0 0"></div>
<div class="a mono" style="left:69px;top:569px">IT1516Plus</div>
<div class="a" style="left:34px;top:587px;width:9px;height:9px;border:1px solid #9a9a9a;background:linear-gradient(#fff,#ddd)"></div>
<div class="a" style="left:36px;top:591px;width:5px;height:1px;background:#000"></div>
<div class="a" style="left:38px;top:589px;width:1px;height:5px;background:#000"></div>
<div class="a" style="left:44px;top:591px;width:6px;height:1px;border-top:1px dotted #808080"></div>
<div class="a" style="left:50px;top:587px;width:14px;height:10px;background:linear-gradient(#faeeb0,#f2d478);border:1px solid #e8c468;border-radius:1px"></div>
<div class="a" style="left:50px;top:585px;width:7px;height:3px;background:#f3dc90;border-radius:1px 1px 0 0"></div>
<div class="a mono" style="left:69px;top:585px">IT1517</div>
<div class="a" style="left:34px;top:603px;width:9px;height:9px;border:1px solid #9a9a9a;background:linear-gradient(#fff,#ddd)"></div>
<div class="a" style="left:36px;top:607px;width:5px;height:1px;background:#000"></div>
<div class="a" style="left:38px;top:605px;width:1px;height:5px;background:#000"></div>
<div class="a" style="left:44px;top:607px;width:6px;height:1px;border-top:1px dotted #808080"></div>
<div class="a" style="left:50px;top:603px;width:14px;height:10px;background:linear-gradient(#faeeb0,#f2d478);border:1px solid #e8c468;border-radius:1px"></div>
<div class="a" style="left:50px;top:601px;width:7px;height:3px;background:#f3dc90;border-radius:1px 1px 0 0"></div>
<div class="a mono" style="left:69px;top:601px">IT1518</div>
<div class="a" style="left:34px;top:619px;width:9px;height:9px;border:1px solid #9a9a9a;background:linear-gradient(#fff,#ddd)"></div>
<div class="a" style="left:36px;top:623px;width:5px;height:1px;background:#000"></div>
<div class="a" style="left:44px;top:623px;width:6px;height:1px;border-top:1px dotted #808080"></div>
<div class="a" style="left:50px;top:619px;width:14px;height:10px;background:linear-gradient(#faeeb0,#f2d478);border:1px solid #e8c468;border-radius:1px"></div>
<div class="a" style="left:50px;top:617px;width:7px;height:3px;background:#f3dc90;border-radius:1px 1px 0 0"></div>
<div class="a mono" style="left:69px;top:617px">IT1550</div>
<div class="a" style="left:57px;top:631px;width:1px;height:8px;border-left:1px dotted #808080"></div>
<div class="a" style="left:58px;top:639px;width:10px;height:1px;border-top:1px dotted #808080"></div>
<div class="a" style="left:72px;top:631px;width:10px;height:16px;background:#e8eef6;border:1px solid #c0c8d0"></div>
<div class="a" style="left:68px;top:634px;width:14px;height:8px;background:#c01820;color:#fff;font-size:6px;font-weight:bold;line-height:8px;text-align:center">PDF</div>
<div class="a mono" style="left:87px;top:633px">IT1550 placement</div>
<div class="a" style="left:57px;top:647px;width:1px;height:8px;border-left:1px dotted #808080"></div>
<div class="a" style="left:58px;top:655px;width:10px;height:1px;border-top:1px dotted #808080"></div>
<div class="a" style="left:72px;top:647px;width:10px;height:16px;background:#e8eef6;border:1px solid #c0c8d0"></div>
<div class="a" style="left:68px;top:650px;width:14px;height:8px;background:#c01820;color:#fff;font-size:6px;font-weight:bold;line-height:8px;text-align:center">PDF</div>
<div class="a" style="left:87px;top:647px;width:100px;height:16px;background:#3399ff;border:1px dotted #000"></div>
<div class="a mono" style="left:87px;top:649px;color:#fff">IT1550 schematic</div>
<div class="a" style="left:34px;top:667px;width:9px;height:9px;border:1px solid #9a9a9a;background:linear-gradient(#fff,#ddd)"></div>
<div class="a" style="left:36px;top:671px;width:5px;height:1px;background:#000"></div>
<div class="a" style="left:38px;top:669px;width:1px;height:5px;background:#000"></div>
<div class="a" style="left:44px;top:671px;width:6px;height:1px;border-top:1px dotted #808080"></div>
<div class="a" style="left:50px;top:667px;width:14px;height:10px;background:linear-gradient(#faeeb0,#f2d478);border:1px solid #e8c468;border-radius:1px"></div>
<div class="a" style="left:50px;top:665px;width:7px;height:3px;background:#f3dc90;border-radius:1px 1px 0 0"></div>
<div class="a mono" style="left:69px;top:665px">IT1551</div>
<div class="a" style="left:34px;top:683px;width:9px;height:9px;border:1px solid #9a9a9a;background:linear-gradient(#fff,#ddd)"></div>
<div class="a" style="left:36px;top:687px;width:5px;height:1px;background:#000"></div>
<div class="a" style="left:38px;top:685px;width:1px;height:5px;background:#000"></div>
<div class="a" style="left:44px;top:687px;width:6px;height:1px;border-top:1px dotted #808080"></div>
<div class="a" style="left:50px;top:683px;width:14px;height:10px;background:linear-gradient(#faeeb0,#f2d478);border:1px solid #e8c468;border-radius:1px"></div>
<div class="a" style="left:50px;top:681px;width:7px;height:3px;background:#f3dc90;border-radius:1px 1px 0 0"></div>
<div class="a mono" style="left:69px;top:681px">IT1553</div>
<div class="a" style="left:34px;top:699px;width:9px;height:9px;border:1px solid #9a9a9a;background:linear-gradient(#fff,#ddd)"></div>
<div class="a" style="left:36px;top:703px;width:5px;height:1px;background:#000"></div>
<div class="a" style="left:38px;top:701px;width:1px;height:5px;background:#000"></div>
<div class="a" style="left:44px;top:703px;width:6px;height:1px;border-top:1px dotted #808080"></div>
<div class="a" style="left:50px;top:699px;width:14px;height:10px;background:linear-gradient(#faeeb0,#f2d478);border:1px solid #e8c468;border-radius:1px"></div>
<div class="a" style="left:50px;top:697px;width:7px;height:3px;background:#f3dc90;border-radius:1px 1px 0 0"></div>
<div class="a mono" style="left:69px;top:697px">IT1555</div>
</div>
<div class="a" style="left:236px;top:141px;width:17px;height:691px;background:#fff;border:1px solid #a8a8a8"></div>
<div class="a" style="left:236px;top:157px;width:17px;height:1px;background:#c8c8c8"></div>
<div class="a" style="left:236px;top:815px;width:17px;height:1px;background:#c8c8c8"></div>
<div class="a" style="left:237px;top:302px;width:15px;height:105px;background:#dcdcdc;border-top:1px solid #bbb;border-bottom:1px solid #bbb"></div>
<div class="a" style="left:241px;top:350px;width:7px;height:2px;background:#555"></div>
<div class="a" style="left:241px;top:353px;width:7px;height:2px;background:#555"></div>
<div class="a" style="left:241px;top:356px;width:7px;height:2px;background:#555"></div>
<svg class="a" style="left:236px;top:141px" width="17" height="17"><path d="M4.5,10.5 L8.5,6.5 L12.5,10.5" fill="none" stroke="#444" stroke-width="1.5"/></svg>
<svg class="a" style="left:236px;top:815px" width="17" height="17"><path d="M4.5,6.5 L8.5,10.5 L12.5,6.5" fill="none" stroke="#444" stroke-width="1.5"/></svg>
<svg class="a" style="left:253px;top:490px" width="8" height="10"><path d="M1.5,1.5 L5.5,5 L1.5,8.5Z" fill="#a81010"/></svg>
<div class="a" style="left:262px;top:134px;width:1259px;height:27px;background:#f0f0f0"></div>
<div class="a" style="left:262px;top:161px;width:1259px;height:2px;background:#8e8e8e"></div>
<div class="a" style="left:262px;top:134px;width:1px;height:28px;background:#b0b0b0"></div>
<svg class="a" style="left:0;top:0" width="1521" height="170">
<defs>
<linearGradient id="tg" x1="0" x2="0" y1="0" y2="1"><stop offset="0" stop-color="#f8e6a0"/><stop offset="1" stop-color="#e0b850"/></linearGradient>
<linearGradient id="bp" x1="0" x2="0" y1="0" y2="1"><stop offset="0" stop-color="#f0f8ff"/><stop offset="1" stop-color="#b8d4ee"/></linearGradient>
<linearGradient id="zb" x1="0" x2="0" y1="0" y2="1"><stop offset="0" stop-color="#e6f4fe"/><stop offset="1" stop-color="#8ccaf4"/></linearGradient>
</defs>
<rect x="269.5" y="140.5" width="6" height="14" fill="url(#tg)" stroke="#d0a850"/>
<path d="M274.5,144.5 H281 L283,146.5 V154.5 H274.5 Z" fill="#fff" stroke="#707880"/>
<path d="M276,147.5 H281 M276,149.5 H281 M276,151.5 H280" stroke="#9ab" stroke-width="0.8"/>
<path d="M298.5,146.5 H304 L307.5,150 V155.5 H298.5 Z" fill="#fff" stroke="#a8b0b8"/>
<path d="M292.5,140.5 H300 L302,142.5 V149.5 H292.5 Z" fill="url(#bp)" stroke="#5a7a98"/>
<path d="M303,141.5 H305 V145 M303.5,145 H306.5 L305,147 Z" stroke="#111" stroke-width="1.2" fill="#111"/>
<path d="M316.5,146.5 H322 L325.5,150 V155.5 H316.5 Z" fill="#fff" stroke="#a8b0b8"/>
<path d="M322.5,140.5 H330 L332,142.5 V149.5 H322.5 Z" fill="url(#bp)" stroke="#5a7a98"/>
<path d="M321,141.5 H319 V145 M317.5,145 H320.5 L319,147 Z" stroke="#111" stroke-width="1.2" fill="#111"/>
<rect x="336" y="137" width="1" height="21" fill="#b8b8b8"/>
<path d="M475,140.5 V155.5 L464.5,148 Z" fill="url(#tg)" stroke="#c8a040"/>
<path d="M491.5,140.5 V155.5 L502,148 Z" fill="url(#tg)" stroke="#c8a040"/>
<rect x="513.5" y="140.5" width="11" height="15" fill="url(#bp)" stroke="#4a6a98"/>
<path d="M515,148 L517.6,144.8 V151.2 Z M523,148 L520.4,144.8 V151.2 Z" fill="#1e5aa0"/>
<rect x="536.5" y="140.5" width="13" height="15" fill="url(#bp)" stroke="#4a6a98"/>
<path d="M543,142.5 L545,144.5 H541 Z M543,153.5 L545,151.5 H541 Z M538.5,148 L540.5,146 V150 Z M547.5,148 L545.5,146 V150 Z" fill="#1e5aa0"/>
<circle cx="567" cy="148" r="7.5" fill="url(#zb)" stroke="#8898a8"/>
<rect x="562.5" y="146.8" width="9" height="2.6" fill="#1a58a0"/>
<circle cx="591" cy="148" r="7.5" fill="url(#zb)" stroke="#8898a8"/>
<rect x="586.5" y="146.8" width="9" height="2.6" fill="#1a58a0"/><rect x="589.7" y="143.5" width="2.6" height="9" fill="#1a58a0"/>
<rect x="603" y="137" width="1" height="21" fill="#b0b0b0"/>
<rect x="812" y="142" width="8" height="12.5" fill="#a0a0a0"/><path d="M826.5,140 V156 L817.5,148 Z" fill="#a0a0a0" stroke="#e6e6e6" stroke-width="0.7"/>
<rect x="844" y="142" width="8" height="12.5" fill="#a0a0a0"/><path d="M837.5,140 V156 L846.5,148 Z" fill="#a0a0a0" stroke="#e6e6e6" stroke-width="0.7"/>
<text x="860" y="155.5" font-size="12" fill="#8a70e0" font-family="Liberation Sans">A</text>
<text x="868" y="147" font-size="8.5" font-weight="bold" fill="#c03090" font-family="Liberation Sans">a</text>
</svg>
<div class="a" style="left:346px;top:141px;font-size:13px;line-height:16px;color:#111">Page:</div>
<div class="a" style="left:385px;top:138px;width:39px;height:20px;background:#fff;border-top:1px solid #c8c8c8;border-left:1px solid #e0e0e0"></div>
<div class="a" style="left:410px;top:141px;font-size:13px;line-height:16px;color:#111">3</div>
<div class="a" style="left:428px;top:141px;font-size:13px;line-height:16px;color:#111">/ 12</div>
<div class="a" style="left:613px;top:141px;font-size:13px;line-height:16px;color:#111">Find:</div>
<div class="a" style="left:646px;top:138px;width:160px;height:20px;background:#fff;border:1px solid #c8c8c8;border-right:0;border-bottom:0"></div>
<div class="a" style="left:262px;top:163px;width:1243px;height:671px;background:#999999"></div>
<div class="a" style="left:1505px;top:163px;width:15px;height:671px;background:#fff"></div>
<div class="a" style="left:1505px;top:177px;width:15px;height:1px;background:#c0c0c0"></div>
<div class="a" style="left:1505px;top:820px;width:15px;height:1px;background:#c0c0c0"></div>
<div class="a" style="left:1505px;top:285px;width:15px;height:54px;background:#dcdcdc;border-top:1px solid #b0b0b0;border-bottom:1px solid #b0b0b0"></div>
<div class="a" style="left:1509px;top:308px;width:7px;height:2px;background:#555"></div>
<div class="a" style="left:1509px;top:311px;width:7px;height:2px;background:#555"></div>
<div class="a" style="left:1509px;top:314px;width:7px;height:2px;background:#555"></div>
<svg class="a" style="left:1505px;top:163px" width="15" height="15"><path d="M3.5,11 L7.5,7 L11.5,11" fill="none" stroke="#444" stroke-width="1.5"/></svg>
<svg class="a" style="left:1505px;top:820px" width="15" height="15"><path d="M3.5,6 L7.5,10 L11.5,6" fill="none" stroke="#444" stroke-width="1.5"/></svg>
<div class="a" style="left:408px;top:163px;width:951px;height:671px;background:#fff;overflow:hidden">
<svg style="position:absolute;left:-408px;top:-163px" width="1521" height="859" font-family="Liberation Sans">
<line x1="1355.5" y1="163" x2="1355.5" y2="833.5" stroke="#8c8c8c" stroke-width="1"/>
<line x1="410" y1="833.5" x2="1356" y2="833.5" stroke="#b0b0b0" stroke-width="1"/>
<line x1="418.5" y1="170.5" x2="1348.5" y2="170.5" stroke="#7a7a7a" stroke-width="1"/>
<line x1="418.5" y1="170.5" x2="418.5" y2="826.5" stroke="#9a9a9a" stroke-width="1"/>
<line x1="418.5" y1="826.5" x2="1348.5" y2="826.5" stroke="#7a7a7a" stroke-width="1"/>
<line x1="1347.5" y1="170.5" x2="1347.5" y2="826.5" stroke="#d0d0d0" stroke-width="1"/>
<line x1="410.5" y1="163" x2="410.5" y2="833.5" stroke="#d4d4d4" stroke-width="1"/>
<line x1="573.5" y1="163" x2="573.5" y2="170" stroke="#7a7a7a" stroke-width="1"/>
<line x1="573.5" y1="826" x2="573.5" y2="833" stroke="#7a7a7a" stroke-width="1"/>
<line x1="728.5" y1="163" x2="728.5" y2="170" stroke="#7a7a7a" stroke-width="1"/>
<line x1="728.5" y1="826" x2="728.5" y2="833" stroke="#7a7a7a" stroke-width="1"/>
<line x1="883.5" y1="163" x2="883.5" y2="170" stroke="#7a7a7a" stroke-width="1"/>
<line x1="883.5" y1="826" x2="883.5" y2="833" stroke="#7a7a7a" stroke-width="1"/>
<line x1="1038.5" y1="163" x2="1038.5" y2="170" stroke="#7a7a7a" stroke-width="1"/>
<line x1="1038.5" y1="826" x2="1038.5" y2="833" stroke="#7a7a7a" stroke-width="1"/>
<line x1="1193.5" y1="163" x2="1193.5" y2="170" stroke="#7a7a7a" stroke-width="1"/>
<line x1="1193.5" y1="826" x2="1193.5" y2="833" stroke="#7a7a7a" stroke-width="1"/>
<line x1="410" y1="301.5" x2="418" y2="301.5" stroke="#7a7a7a" stroke-width="1"/>
<line x1="1348" y1="301.5" x2="1356" y2="301.5" stroke="#7a7a7a" stroke-width="1"/>
<line x1="410" y1="432.5" x2="418" y2="432.5" stroke="#7a7a7a" stroke-width="1"/>
<line x1="1348" y1="432.5" x2="1356" y2="432.5" stroke="#7a7a7a" stroke-width="1"/>
<line x1="410" y1="564.5" x2="418" y2="564.5" stroke="#7a7a7a" stroke-width="1"/>
<line x1="1348" y1="564.5" x2="1356" y2="564.5" stroke="#7a7a7a" stroke-width="1"/>
<line x1="410" y1="695.5" x2="418" y2="695.5" stroke="#7a7a7a" stroke-width="1"/>
<line x1="1348" y1="695.5" x2="1356" y2="695.5" stroke="#7a7a7a" stroke-width="1"/>
<text x="498" y="168.8" font-size="6.5" fill="#333" text-anchor="middle">6</text>
<text x="499" y="832.6" font-size="6.5" fill="#333" text-anchor="middle">6</text>
<text x="649.5" y="168.8" font-size="6.5" fill="#333" text-anchor="middle">5</text>
<text x="650.5" y="832.6" font-size="6.5" fill="#333" text-anchor="middle">5</text>
<text x="811" y="168.8" font-size="6.5" fill="#333" text-anchor="middle">4</text>
<text x="812" y="832.6" font-size="6.5" fill="#333" text-anchor="middle">4</text>
<text x="961.5" y="168.8" font-size="6.5" fill="#333" text-anchor="middle">3</text>
<text x="962.5" y="832.6" font-size="6.5" fill="#333" text-anchor="middle">3</text>
<text x="1114" y="168.8" font-size="6.5" fill="#333" text-anchor="middle">2</text>
<text x="1115" y="832.6" font-size="6.5" fill="#333" text-anchor="middle">2</text>
<text x="1275" y="168.8" font-size="6.5" fill="#333" text-anchor="middle">1</text>
<text x="1276" y="832.6" font-size="6.5" fill="#333" text-anchor="middle">1</text>
<text x="414.8" y="243" font-size="9.6" fill="#222" text-anchor="middle">E</text>
<text x="1351.5" y="243" font-size="9.6" fill="#222" text-anchor="middle">E</text>
<text x="414.8" y="368.6" font-size="7.6" fill="#222" text-anchor="middle">D</text>
<text x="1351.5" y="368.6" font-size="7.6" fill="#222" text-anchor="middle">D</text>
<text x="414.8" y="503" font-size="8.2" fill="#222" text-anchor="middle">C</text>
<text x="1351.5" y="503" font-size="8.2" fill="#222" text-anchor="middle">C</text>
<text x="414.8" y="632.8" font-size="6.8" fill="#222" text-anchor="middle">B</text>
<text x="1351.5" y="632.8" font-size="6.8" fill="#222" text-anchor="middle">B</text>
<text x="414.8" y="765.7" font-size="7.6" fill="#222" text-anchor="middle">A</text>
<text x="1351.5" y="765.7" font-size="7.6" fill="#222" text-anchor="middle">A</text>
<rect x="1210.5" y="170.5" width="137" height="48" fill="none" stroke="#7a7a7a"/>
<line x1="1210.5" y1="178.5" x2="1348" y2="178.5" stroke="#7a7a7a" stroke-width="1"/>
<line x1="1210.5" y1="186.5" x2="1348" y2="186.5" stroke="#7a7a7a" stroke-width="1"/>
<line x1="1210.5" y1="194.5" x2="1348" y2="194.5" stroke="#7a7a7a" stroke-width="1"/>
<line x1="1210.5" y1="202.5" x2="1348" y2="202.5" stroke="#7a7a7a" stroke-width="1"/>
<line x1="1210.5" y1="210.5" x2="1348" y2="210.5" stroke="#7a7a7a" stroke-width="1"/>
<line x1="1233.5" y1="178.5" x2="1233.5" y2="218.5" stroke="#7a7a7a" stroke-width="1"/>
<line x1="1293.5" y1="178.5" x2="1293.5" y2="218.5" stroke="#7a7a7a" stroke-width="1"/>
<line x1="1329.5" y1="178.5" x2="1329.5" y2="218.5" stroke="#7a7a7a" stroke-width="1"/>
<text x="1277" y="177" font-size="3.5" fill="#6a6a6a" text-anchor="middle">REVISION RECORD</text>
<text x="1221" y="184.5" font-size="3.5" fill="#6a6a6a" text-anchor="middle">LTR</text>
<text x="1261" y="184.5" font-size="3.5" fill="#6a6a6a" text-anchor="middle">ECO NO:</text>
<text x="1309" y="184.5" font-size="3.5" fill="#6a6a6a" text-anchor="middle">APPROVED:</text>
<text x="1337" y="184.5" font-size="3.5" fill="#6a6a6a" text-anchor="middle">DATE:</text>
<text x="727" y="205.5" font-size="3.5" fill="#6a6a6a" text-anchor="middle">U600 A</text>
<path d="M685.5,739.5 L685.5,238 L694,229.5 L893.5,229.5 L893.5,739.5 Z" stroke="#7a7a7a" stroke-width="1" fill="none"/>
<line x1="685.5" y1="245.5" x2="893.5" y2="245.5" stroke="#7a7a7a" stroke-width="1"/>
<text x="816.6" y="243" font-size="15" fill="#111" textLength="51.3" lengthAdjust="spacingAndGlyphs">DIGITAL</text>
<line x1="788.5" y1="245.5" x2="788.5" y2="721.5" stroke="#7a7a7a" stroke-width="1"/>
<line x1="685.5" y1="721.5" x2="893.5" y2="721.5" stroke="#7a7a7a" stroke-width="1"/>
<path d="M785,246 Q788.5,247 788.5,250" stroke="#7a7a7a" stroke-width="1" fill="none"/>
<line x1="685.5" y1="409.5" x2="788.5" y2="409.5" stroke="#7a7a7a" stroke-width="1"/>
<line x1="685.5" y1="473.5" x2="788.5" y2="473.5" stroke="#7a7a7a" stroke-width="1"/>
<line x1="685.5" y1="511.5" x2="788.5" y2="511.5" stroke="#7a7a7a" stroke-width="1"/>
<line x1="685.5" y1="546.5" x2="788.5" y2="546.5" stroke="#7a7a7a" stroke-width="1"/>
<line x1="685.5" y1="626.5" x2="788.5" y2="626.5" stroke="#7a7a7a" stroke-width="1"/>
<line x1="685.5" y1="673.5" x2="788.5" y2="673.5" stroke="#7a7a7a" stroke-width="1"/>
<path d="M685.5,381.5 L737,381.5 Q741.5,383 741.5,388 L741.5,399 Q741.5,404 737,405.5 L685.5,405.5" stroke="#7a7a7a" stroke-width="1" fill="none"/>
<text x="733" y="394" font-size="3.5" fill="#6a6a6a" text-anchor="middle" transform="rotate(-90 733 394)">CRB 0</text>
<line x1="788.5" y1="292.5" x2="893.5" y2="292.5" stroke="#7a7a7a" stroke-width="1"/>
<line x1="788.5" y1="334.5" x2="893.5" y2="334.5" stroke="#7a7a7a" stroke-width="1"/>
<line x1="788.5" y1="356.5" x2="893.5" y2="356.5" stroke="#7a7a7a" stroke-width="1"/>
<line x1="788.5" y1="376.5" x2="893.5" y2="376.5" stroke="#7a7a7a" stroke-width="1"/>
<line x1="788.5" y1="396.5" x2="893.5" y2="396.5" stroke="#7a7a7a" stroke-width="1"/>
<line x1="788.5" y1="421.5" x2="893.5" y2="421.5" stroke="#7a7a7a" stroke-width="1"/>
<line x1="788.5" y1="435.5" x2="893.5" y2="435.5" stroke="#7a7a7a" stroke-width="1"/>
<line x1="788.5" y1="451.5" x2="893.5" y2="451.5" stroke="#7a7a7a" stroke-width="1"/>
<line x1="788.5" y1="465.5" x2="893.5" y2="465.5" stroke="#7a7a7a" stroke-width="1"/>
<line x1="788.5" y1="499.5" x2="893.5" y2="499.5" stroke="#7a7a7a" stroke-width="1"/>
<line x1="788.5" y1="531.5" x2="893.5" y2="531.5" stroke="#7a7a7a" stroke-width="1"/>
<line x1="788.5" y1="556.5" x2="893.5" y2="556.5" stroke="#7a7a7a" stroke-width="1"/>
<line x1="788.5" y1="630.5" x2="893.5" y2="630.5" stroke="#7a7a7a" stroke-width="1"/>
<line x1="788.5" y1="662.5" x2="893.5" y2="662.5" stroke="#7a7a7a" stroke-width="1"/>
<line x1="788.5" y1="700.5" x2="893.5" y2="700.5" stroke="#7a7a7a" stroke-width="1"/>
<line x1="788.5" y1="713.5" x2="893.5" y2="713.5" stroke="#7a7a7a" stroke-width="1"/>
<text x="797.8" y="279" font-size="7.4" fill="#2a2a2a" transform="rotate(-90 797.8 279)" textLength="20" lengthAdjust="spacingAndGlyphs">SDIO 0</text>
<text x="797.8" y="319" font-size="7.4" fill="#2a2a2a" transform="rotate(-90 797.8 319)" textLength="20" lengthAdjust="spacingAndGlyphs">SDIO 1</text>
<text x="784.5" y="348" font-size="7.4" fill="#2a2a2a" transform="rotate(-90 784.5 348)" textLength="23.3" lengthAdjust="spacingAndGlyphs">RF CTRL</text>
<text x="799.2" y="415.5" font-size="7.4" fill="#2a2a2a" transform="rotate(-90 799.2 415.5)" textLength="15" lengthAdjust="spacingAndGlyphs">SPI 0</text>
<text x="799.3" y="488" font-size="7.4" fill="#2a2a2a" transform="rotate(-90 799.3 488)" textLength="12.5" lengthAdjust="spacingAndGlyphs">IIS 0</text>
<text x="799.3" y="520" font-size="7.4" fill="#2a2a2a" transform="rotate(-90 799.3 520)" textLength="13" lengthAdjust="spacingAndGlyphs">IIS 1</text>
<text x="800.4" y="595.6" font-size="7.4" fill="#2a2a2a" transform="rotate(-90 800.4 595.6)" textLength="15" lengthAdjust="spacingAndGlyphs">UART</text>
<text x="800.4" y="651.6" font-size="7.4" fill="#2a2a2a" transform="rotate(-90 800.4 651.6)" textLength="15" lengthAdjust="spacingAndGlyphs">JTAG</text>
<text x="800.4" y="691.5" font-size="7.4" fill="#2a2a2a" transform="rotate(-90 800.4 691.5)" textLength="22.7" lengthAdjust="spacingAndGlyphs">KEYPAD</text>
<text x="774.2" y="446.5" font-size="7.4" fill="#2a2a2a" transform="rotate(-90 774.2 446.5)" textLength="17" lengthAdjust="spacingAndGlyphs">TRACE</text>
<text x="779.4" y="500.6" font-size="7.4" fill="#2a2a2a" transform="rotate(-90 779.4 500.6)" textLength="13.6" lengthAdjust="spacingAndGlyphs">CCIR</text>
<text x="779.4" y="535.2" font-size="7.4" fill="#2a2a2a" transform="rotate(-90 779.4 535.2)" textLength="11.5" lengthAdjust="spacingAndGlyphs">LCD</text>
<text x="777.8" y="599.9" font-size="7.4" fill="#2a2a2a" transform="rotate(-90 777.8 599.9)" textLength="39" lengthAdjust="spacingAndGlyphs">MIPI DISPLAY</text>
<text x="778" y="664.5" font-size="7.4" fill="#2a2a2a" transform="rotate(-90 778 664.5)" textLength="32.3" lengthAdjust="spacingAndGlyphs">MIPI CAM A</text>
<text x="778" y="714" font-size="7.4" fill="#2a2a2a" transform="rotate(-90 778 714)" textLength="32.2" lengthAdjust="spacingAndGlyphs">MIPI CAM B</text>
<text x="796.4" y="346.9" font-size="7.4" fill="#2a2a2a" textLength="16" lengthAdjust="spacingAndGlyphs">SIM 0</text>
<text x="794.5" y="364.8" font-size="7.4" fill="#2a2a2a" textLength="16" lengthAdjust="spacingAndGlyphs">SIM 1</text>
<text x="794.5" y="389" font-size="7.4" fill="#2a2a2a" textLength="16" lengthAdjust="spacingAndGlyphs">SIM 2</text>
<text x="793.7" y="433.1" font-size="7.4" fill="#2a2a2a" textLength="13.6" lengthAdjust="spacingAndGlyphs">IIC 1</text>
<text x="793.7" y="448.8" font-size="7.4" fill="#2a2a2a" textLength="13.6" lengthAdjust="spacingAndGlyphs">IIC 2</text>
<text x="793.7" y="462.5" font-size="7.4" fill="#2a2a2a" textLength="13.6" lengthAdjust="spacingAndGlyphs">IIC 3</text>
<text x="795.8" y="543.6" font-size="7.4" fill="#2a2a2a" textLength="30.4" lengthAdjust="spacingAndGlyphs">MEMS MIC</text>
<text x="794.4" y="708.7" font-size="7.4" fill="#2a2a2a" textLength="20" lengthAdjust="spacingAndGlyphs">EXTINT</text>
<text x="793.9" y="720.6" font-size="7.4" fill="#2a2a2a" textLength="9.7" lengthAdjust="spacingAndGlyphs">CLK</text>
<text x="806" y="270" font-size="3.2" fill="#6a6a6a" text-anchor="middle" transform="rotate(-90 806 270)">(VIO)</text>
<text x="806" y="309" font-size="3.2" fill="#6a6a6a" text-anchor="middle" transform="rotate(-90 806 309)">(VIO)</text>
<text x="776" y="337" font-size="3.2" fill="#6a6a6a" text-anchor="middle" transform="rotate(-90 776 337)">(VIO)</text>
<text x="806" y="408" font-size="3.2" fill="#6a6a6a" text-anchor="middle" transform="rotate(-90 806 408)">(VIO)</text>
<text x="805.5" y="474" font-size="3.2" fill="#6a6a6a" text-anchor="middle" transform="rotate(-90 805.5 474)">(VIO)</text>
<text x="806.5" y="515" font-size="3.2" fill="#6a6a6a" text-anchor="middle" transform="rotate(-90 806.5 515)">(VIO)</text>
<text x="806" y="589" font-size="3.2" fill="#6a6a6a" text-anchor="middle" transform="rotate(-90 806 589)">(VIO)</text>
<text x="806" y="644" font-size="3.2" fill="#6a6a6a" text-anchor="middle" transform="rotate(-90 806 644)">(VIO)</text>
<text x="806" y="680" font-size="3.2" fill="#6a6a6a" text-anchor="middle" transform="rotate(-90 806 680)">(VIO)</text>
<text x="765.5" y="437" font-size="3.2" fill="#6a6a6a" text-anchor="middle" transform="rotate(-90 765.5 437)">(VIO)</text>
<text x="770" y="492" font-size="3.2" fill="#6a6a6a" text-anchor="middle" transform="rotate(-90 770 492)">(VCAM)</text>
<text x="771" y="529" font-size="3.2" fill="#6a6a6a" text-anchor="middle" transform="rotate(-90 771 529)">(VCON)</text>
<text x="769" y="580" font-size="3.2" fill="#6a6a6a" text-anchor="middle" transform="rotate(-90 769 580)">(MIPI_DPHY)</text>
<text x="770" y="648" font-size="3.2" fill="#6a6a6a" text-anchor="middle" transform="rotate(-90 770 648)">(MIPI_DPHY)</text>
<text x="770" y="698" font-size="3.2" fill="#6a6a6a" text-anchor="middle" transform="rotate(-90 770 698)">(MIPI_DPHY)</text>
<text x="822" y="346" font-size="3.2" fill="#6a6a6a" text-anchor="start">(VSIM0)</text>
<text x="797" y="372" font-size="3.2" fill="#6a6a6a" text-anchor="start">(VSIM1)</text>
<text x="797" y="395" font-size="3.2" fill="#6a6a6a" text-anchor="start">(VSIM2)</text>
<text x="810" y="434" font-size="3.2" fill="#6a6a6a" text-anchor="start">(VIO_1)</text>
<text x="812" y="448" font-size="3.2" fill="#6a6a6a" text-anchor="start">(VIO)</text>
<text x="812" y="461" font-size="3.2" fill="#6a6a6a" text-anchor="start">(VIO_2)</text>
<text x="802" y="549" font-size="3.2" fill="#6a6a6a" text-anchor="start">(VIO)</text>
<text x="818" y="708" font-size="3.2" fill="#6a6a6a" text-anchor="start">(VIO)</text>
<text x="806" y="718" font-size="3.2" fill="#6a6a6a" text-anchor="start">(VIO)</text>
<text x="747" y="521" font-size="3" fill="#6a6a6a" text-anchor="start">CCIR_PCLK</text>
<text x="747" y="527" font-size="3" fill="#6a6a6a" text-anchor="start">CCIR_HSYNC</text>
<text x="747" y="533" font-size="3" fill="#6a6a6a" text-anchor="start">CCIR_VSYNC</text>
<text x="747" y="539" font-size="3" fill="#6a6a6a" text-anchor="start">CCIR_RST</text>
<line x1="676" y1="260.5" x2="685.5" y2="260.5" stroke="#7a7a7a" stroke-width="0.8"/>
<text x="680.5" y="259.4" font-size="3.2" fill="#6a6a6a" text-anchor="middle">R05</text>
<line x1="592.5" y1="260.5" x2="676" y2="260.5" stroke="#7a7a7a" stroke-width="0.8"/>
<path d="M586.5,258.0 L592.5,258.0 L592.5,263.0 L586.5,263.0 L584.5,260.5 Z" stroke="#7a7a7a" stroke-width="0.8" fill="none"/>
<text x="583.0" y="261.8" font-size="3.2" fill="#6a6a6a" text-anchor="end">W_WPCTRL_VBGS</text>
<text x="551.7" y="261.5" font-size="3.2" fill="#6a6a6a" text-anchor="end">[1]</text>
<line x1="676" y1="266.55" x2="685.5" y2="266.55" stroke="#7a7a7a" stroke-width="0.8"/>
<text x="680.5" y="265.45" font-size="3.2" fill="#6a6a6a" text-anchor="middle">G28</text>
<line x1="592.5" y1="266.55" x2="676" y2="266.55" stroke="#7a7a7a" stroke-width="0.8"/>
<path d="M586.5,264.05 L592.5,264.05 L592.5,269.05 L586.5,269.05 L584.5,266.55 Z" stroke="#7a7a7a" stroke-width="0.8" fill="none"/>
<text x="583.0" y="267.85" font-size="3.2" fill="#6a6a6a" text-anchor="end">W_WPCTRL_VBGE</text>
<text x="551.7" y="267.55" font-size="3.2" fill="#6a6a6a" text-anchor="end">[1]</text>
<line x1="676" y1="272.6" x2="685.5" y2="272.6" stroke="#7a7a7a" stroke-width="0.8"/>
<text x="680.5" y="271.5" font-size="3.2" fill="#6a6a6a" text-anchor="middle">R05</text>
<line x1="592.5" y1="272.6" x2="676" y2="272.6" stroke="#7a7a7a" stroke-width="0.8"/>
<path d="M586.5,270.1 L592.5,270.1 L592.5,275.1 L586.5,275.1 L584.5,272.6 Z" stroke="#7a7a7a" stroke-width="0.8" fill="none"/>
<text x="583.0" y="273.90000000000003" font-size="3.2" fill="#6a6a6a" text-anchor="end">W_WPCTRL_GDRPA_HBDR</text>
<text x="539.1" y="273.6" font-size="3.2" fill="#6a6a6a" text-anchor="end">[1]</text>
<line x1="676" y1="278.65" x2="685.5" y2="278.65" stroke="#7a7a7a" stroke-width="0.8"/>
<text x="680.5" y="277.54999999999995" font-size="3.2" fill="#6a6a6a" text-anchor="middle">E22</text>
<line x1="676" y1="284.7" x2="685.5" y2="284.7" stroke="#7a7a7a" stroke-width="0.8"/>
<text x="680.5" y="283.59999999999997" font-size="3.2" fill="#6a6a6a" text-anchor="middle">D07</text>
<line x1="592.5" y1="284.7" x2="676" y2="284.7" stroke="#7a7a7a" stroke-width="0.8"/>
<path d="M586.5,282.2 L592.5,282.2 L592.5,287.2 L586.5,287.2 L584.5,284.7 Z" stroke="#7a7a7a" stroke-width="0.8" fill="none"/>
<text x="583.0" y="286.0" font-size="3.2" fill="#6a6a6a" text-anchor="end">PA_MODE0</text>
<text x="562.2" y="285.7" font-size="3.2" fill="#6a6a6a" text-anchor="end">[1]</text>
<line x1="676" y1="290.75" x2="685.5" y2="290.75" stroke="#7a7a7a" stroke-width="0.8"/>
<text x="680.5" y="289.65" font-size="3.2" fill="#6a6a6a" text-anchor="middle">B09</text>
<line x1="592.5" y1="290.75" x2="676" y2="290.75" stroke="#7a7a7a" stroke-width="0.8"/>
<path d="M586.5,288.25 L592.5,288.25 L592.5,293.25 L586.5,293.25 L584.5,290.75 Z" stroke="#7a7a7a" stroke-width="0.8" fill="none"/>
<text x="583.0" y="292.05" font-size="3.2" fill="#6a6a6a" text-anchor="end">PA_MODE1</text>
<text x="562.2" y="291.75" font-size="3.2" fill="#6a6a6a" text-anchor="end">[1]</text>
<line x1="676" y1="296.8" x2="685.5" y2="296.8" stroke="#7a7a7a" stroke-width="0.8"/>
<text x="680.5" y="295.7" font-size="3.2" fill="#6a6a6a" text-anchor="middle">E22</text>
<line x1="592.5" y1="296.8" x2="676" y2="296.8" stroke="#7a7a7a" stroke-width="0.8"/>
<path d="M586.5,294.3 L592.5,294.3 L592.5,299.3 L586.5,299.3 L584.5,296.8 Z" stroke="#7a7a7a" stroke-width="0.8" fill="none"/>
<text x="583.0" y="298.1" font-size="3.2" fill="#6a6a6a" text-anchor="end">SG_PA_BB_EN</text>
<text x="555.9" y="297.8" font-size="3.2" fill="#6a6a6a" text-anchor="end">[1]</text>
<line x1="676" y1="302.85" x2="685.5" y2="302.85" stroke="#7a7a7a" stroke-width="0.8"/>
<text x="680.5" y="301.75" font-size="3.2" fill="#6a6a6a" text-anchor="middle">L29</text>
<line x1="592.5" y1="302.85" x2="676" y2="302.85" stroke="#7a7a7a" stroke-width="0.8"/>
<path d="M586.5,300.35 L592.5,300.35 L592.5,305.35 L586.5,305.35 L584.5,302.85 Z" stroke="#7a7a7a" stroke-width="0.8" fill="none"/>
<text x="583.0" y="304.15000000000003" font-size="3.2" fill="#6a6a6a" text-anchor="end">SG_PA_LB_EN</text>
<text x="555.9" y="303.85" font-size="3.2" fill="#6a6a6a" text-anchor="end">[1]</text>
<line x1="676" y1="308.9" x2="685.5" y2="308.9" stroke="#7a7a7a" stroke-width="0.8"/>
<text x="680.5" y="307.79999999999995" font-size="3.2" fill="#6a6a6a" text-anchor="middle">L25</text>
<line x1="592.5" y1="308.9" x2="676" y2="308.9" stroke="#7a7a7a" stroke-width="0.8"/>
<path d="M586.5,306.4 L592.5,306.4 L592.5,311.4 L586.5,311.4 L584.5,308.9 Z" stroke="#7a7a7a" stroke-width="0.8" fill="none"/>
<text x="583.0" y="310.2" font-size="3.2" fill="#6a6a6a" text-anchor="end">GPIO47_PA_CTL4</text>
<text x="549.6" y="309.9" font-size="3.2" fill="#6a6a6a" text-anchor="end">[1]</text>
<line x1="676" y1="314.95" x2="685.5" y2="314.95" stroke="#7a7a7a" stroke-width="0.8"/>
<text x="680.5" y="313.84999999999997" font-size="3.2" fill="#6a6a6a" text-anchor="middle">R07</text>
<line x1="676" y1="321.0" x2="685.5" y2="321.0" stroke="#7a7a7a" stroke-width="0.8"/>
<text x="680.5" y="319.9" font-size="3.2" fill="#6a6a6a" text-anchor="middle">E22</text>
<line x1="592.5" y1="321.0" x2="676" y2="321.0" stroke="#7a7a7a" stroke-width="0.8"/>
<path d="M586.5,318.5 L592.5,318.5 L592.5,323.5 L586.5,323.5 L584.5,321.0 Z" stroke="#7a7a7a" stroke-width="0.8" fill="none"/>
<text x="583.0" y="322.3" font-size="3.2" fill="#6a6a6a" text-anchor="end">WPCTRL_GDRPA_TXEN</text>
<text x="543.3" y="322.0" font-size="3.2" fill="#6a6a6a" text-anchor="end">[1]</text>
<line x1="676" y1="327.05" x2="685.5" y2="327.05" stroke="#7a7a7a" stroke-width="0.8"/>
<text x="680.5" y="325.95" font-size="3.2" fill="#6a6a6a" text-anchor="middle">E22</text>
<line x1="676" y1="333.1" x2="685.5" y2="333.1" stroke="#7a7a7a" stroke-width="0.8"/>
<text x="680.5" y="332.0" font-size="3.2" fill="#6a6a6a" text-anchor="middle">G22</text>
<line x1="592.5" y1="333.1" x2="676" y2="333.1" stroke="#7a7a7a" stroke-width="0.8"/>
<path d="M586.5,330.6 L592.5,330.6 L592.5,335.6 L586.5,335.6 L584.5,333.1 Z" stroke="#7a7a7a" stroke-width="0.8" fill="none"/>
<text x="583.0" y="334.40000000000003" font-size="3.2" fill="#6a6a6a" text-anchor="end">GPIO48_PA_CTL2</text>
<text x="549.6" y="334.1" font-size="3.2" fill="#6a6a6a" text-anchor="end">[1]</text>
<line x1="676" y1="339.15" x2="685.5" y2="339.15" stroke="#7a7a7a" stroke-width="0.8"/>
<text x="680.5" y="338.04999999999995" font-size="3.2" fill="#6a6a6a" text-anchor="middle">K27</text>
<line x1="676" y1="345.2" x2="685.5" y2="345.2" stroke="#7a7a7a" stroke-width="0.8"/>
<text x="680.5" y="344.09999999999997" font-size="3.2" fill="#6a6a6a" text-anchor="middle">L25</text>
<line x1="592.5" y1="345.2" x2="676" y2="345.2" stroke="#7a7a7a" stroke-width="0.8"/>
<path d="M586.5,342.7 L592.5,342.7 L592.5,347.7 L586.5,347.7 L584.5,345.2 Z" stroke="#7a7a7a" stroke-width="0.8" fill="none"/>
<text x="583.0" y="346.5" font-size="3.2" fill="#6a6a6a" text-anchor="end">GPS_LNA_EN</text>
<text x="558.0" y="346.2" font-size="3.2" fill="#6a6a6a" text-anchor="end">[1]</text>
<line x1="676" y1="351.25" x2="685.5" y2="351.25" stroke="#7a7a7a" stroke-width="0.8"/>
<text x="680.5" y="350.15" font-size="3.2" fill="#6a6a6a" text-anchor="middle">K27</text>
<line x1="676" y1="357.3" x2="685.5" y2="357.3" stroke="#7a7a7a" stroke-width="0.8"/>
<text x="680.5" y="356.2" font-size="3.2" fill="#6a6a6a" text-anchor="middle">R03</text>
<line x1="592.5" y1="357.3" x2="676" y2="357.3" stroke="#7a7a7a" stroke-width="0.8"/>
<path d="M586.5,354.8 L592.5,354.8 L592.5,359.8 L586.5,359.8 L584.5,357.3 Z" stroke="#7a7a7a" stroke-width="0.8" fill="none"/>
<text x="583.0" y="358.6" font-size="3.2" fill="#6a6a6a" text-anchor="end">W_SPDCK</text>
<text x="564.3" y="358.3" font-size="3.2" fill="#6a6a6a" text-anchor="end">[1]</text>
<line x1="676" y1="363.35" x2="685.5" y2="363.35" stroke="#7a7a7a" stroke-width="0.8"/>
<text x="680.5" y="362.25" font-size="3.2" fill="#6a6a6a" text-anchor="middle">B09</text>
<line x1="592.5" y1="363.35" x2="676" y2="363.35" stroke="#7a7a7a" stroke-width="0.8"/>
<path d="M586.5,360.85 L592.5,360.85 L592.5,365.85 L586.5,365.85 L584.5,363.35 Z" stroke="#7a7a7a" stroke-width="0.8" fill="none"/>
<text x="583.0" y="364.65000000000003" font-size="3.2" fill="#6a6a6a" text-anchor="end">W_SPDAN</text>
<text x="564.3" y="364.35" font-size="3.2" fill="#6a6a6a" text-anchor="end">[1]</text>
<line x1="676" y1="369.4" x2="685.5" y2="369.4" stroke="#7a7a7a" stroke-width="0.8"/>
<text x="680.5" y="368.29999999999995" font-size="3.2" fill="#6a6a6a" text-anchor="middle">D07</text>
<line x1="592.5" y1="369.4" x2="676" y2="369.4" stroke="#7a7a7a" stroke-width="0.8"/>
<path d="M586.5,366.9 L592.5,366.9 L592.5,371.9 L586.5,371.9 L584.5,369.4 Z" stroke="#7a7a7a" stroke-width="0.8" fill="none"/>
<text x="583.0" y="370.7" font-size="3.2" fill="#6a6a6a" text-anchor="end">W_MODEM</text>
<text x="564.3" y="370.4" font-size="3.2" fill="#6a6a6a" text-anchor="end">[1]</text>
<line x1="676" y1="375.0" x2="685.5" y2="375.0" stroke="#7a7a7a" stroke-width="0.8"/>
<text x="680.5" y="373.9" font-size="3.2" fill="#6a6a6a" text-anchor="middle">R09</text>
<line x1="676" y1="384.8" x2="685.5" y2="384.8" stroke="#7a7a7a" stroke-width="0.8"/>
<text x="680.5" y="383.7" font-size="3.2" fill="#6a6a6a" text-anchor="middle">B05</text>
<line x1="592.5" y1="384.8" x2="676" y2="384.8" stroke="#7a7a7a" stroke-width="0.8"/>
<path d="M586.5,382.3 L592.5,382.3 L592.5,387.3 L586.5,387.3 L584.5,384.8 Z" stroke="#7a7a7a" stroke-width="0.8" fill="none"/>
<text x="583.0" y="386.1" font-size="3.2" fill="#6a6a6a" text-anchor="end">GLN_RX_EN</text>
<text x="560.1" y="385.8" font-size="3.2" fill="#6a6a6a" text-anchor="end">[1]</text>
<line x1="676" y1="392.5" x2="685.5" y2="392.5" stroke="#7a7a7a" stroke-width="0.8"/>
<text x="680.5" y="391.4" font-size="3.2" fill="#6a6a6a" text-anchor="middle">N28</text>
<line x1="592.5" y1="392.5" x2="676" y2="392.5" stroke="#7a7a7a" stroke-width="0.8"/>
<path d="M586.5,390.0 L592.5,390.0 L592.5,395.0 L586.5,395.0 L584.5,392.5 Z" stroke="#7a7a7a" stroke-width="0.8" fill="none"/>
<text x="583.0" y="393.8" font-size="3.2" fill="#6a6a6a" text-anchor="end">WIFI_TX_EN</text>
<text x="558.0" y="393.5" font-size="3.2" fill="#6a6a6a" text-anchor="end">[1]</text>
<line x1="676" y1="400.7" x2="685.5" y2="400.7" stroke="#7a7a7a" stroke-width="0.8"/>
<text x="680.5" y="399.59999999999997" font-size="3.2" fill="#6a6a6a" text-anchor="middle">B07</text>
<line x1="592.5" y1="400.7" x2="676" y2="400.7" stroke="#7a7a7a" stroke-width="0.8"/>
<path d="M586.5,398.2 L592.5,398.2 L592.5,403.2 L586.5,403.2 L584.5,400.7 Z" stroke="#7a7a7a" stroke-width="0.8" fill="none"/>
<text x="583.0" y="402.0" font-size="3.2" fill="#6a6a6a" text-anchor="end">BT_TX_EN</text>
<text x="562.2" y="401.7" font-size="3.2" fill="#6a6a6a" text-anchor="end">[1]</text>
<line x1="676" y1="412.5" x2="685.5" y2="412.5" stroke="#7a7a7a" stroke-width="0.8"/>
<text x="680.5" y="411.4" font-size="3.2" fill="#6a6a6a" text-anchor="middle">K04</text>
<line x1="676" y1="418.5" x2="685.5" y2="418.5" stroke="#7a7a7a" stroke-width="0.8"/>
<text x="680.5" y="417.4" font-size="3.2" fill="#6a6a6a" text-anchor="middle">E22</text>
<line x1="676" y1="424.5" x2="685.5" y2="424.5" stroke="#7a7a7a" stroke-width="0.8"/>
<text x="680.5" y="423.4" font-size="3.2" fill="#6a6a6a" text-anchor="middle">R03</text>
<line x1="676" y1="430.5" x2="685.5" y2="430.5" stroke="#7a7a7a" stroke-width="0.8"/>
<text x="680.5" y="429.4" font-size="3.2" fill="#6a6a6a" text-anchor="middle">G23</text>
<line x1="676" y1="436.5" x2="685.5" y2="436.5" stroke="#7a7a7a" stroke-width="0.8"/>
<text x="680.5" y="435.4" font-size="3.2" fill="#6a6a6a" text-anchor="middle">G22</text>
<line x1="676" y1="442.5" x2="685.5" y2="442.5" stroke="#7a7a7a" stroke-width="0.8"/>
<text x="680.5" y="441.4" font-size="3.2" fill="#6a6a6a" text-anchor="middle">K06</text>
<line x1="676" y1="448.5" x2="685.5" y2="448.5" stroke="#7a7a7a" stroke-width="0.8"/>
<text x="680.5" y="447.4" font-size="3.2" fill="#6a6a6a" text-anchor="middle">G28</text>
<line x1="676" y1="454.5" x2="685.5" y2="454.5" stroke="#7a7a7a" stroke-width="0.8"/>
<text x="680.5" y="453.4" font-size="3.2" fill="#6a6a6a" text-anchor="middle">R05</text>
<line x1="676" y1="460.5" x2="685.5" y2="460.5" stroke="#7a7a7a" stroke-width="0.8"/>
<text x="680.5" y="459.4" font-size="3.2" fill="#6a6a6a" text-anchor="middle">F09</text>
<line x1="676" y1="466.5" x2="685.5" y2="466.5" stroke="#7a7a7a" stroke-width="0.8"/>
<text x="680.5" y="465.4" font-size="3.2" fill="#6a6a6a" text-anchor="middle">B05</text>
<line x1="676" y1="477.3" x2="685.5" y2="477.3" stroke="#7a7a7a" stroke-width="0.8"/>
<text x="680.5" y="476.2" font-size="3.2" fill="#6a6a6a" text-anchor="middle">G28</text>
<line x1="617.5" y1="477.3" x2="676" y2="477.3" stroke="#7a7a7a" stroke-width="0.8"/>
<path d="M611.5,474.8 L617.5,474.8 L617.5,479.8 L611.5,479.8 L609.5,477.3 Z" stroke="#7a7a7a" stroke-width="0.8" fill="none"/>
<text x="608.0" y="478.6" font-size="3.2" fill="#6a6a6a" text-anchor="end">EXT_SCL</text>
<text x="589.3" y="478.3" font-size="3.2" fill="#6a6a6a" text-anchor="end">[1]</text>
<line x1="676" y1="483.25" x2="685.5" y2="483.25" stroke="#7a7a7a" stroke-width="0.8"/>
<text x="680.5" y="482.15" font-size="3.2" fill="#6a6a6a" text-anchor="middle">D02</text>
<line x1="617.5" y1="483.25" x2="676" y2="483.25" stroke="#7a7a7a" stroke-width="0.8"/>
<path d="M611.5,480.75 L617.5,480.75 L617.5,485.75 L611.5,485.75 L609.5,483.25 Z" stroke="#7a7a7a" stroke-width="0.8" fill="none"/>
<text x="608.0" y="484.55" font-size="3.2" fill="#6a6a6a" text-anchor="end">EXT_SDA</text>
<text x="589.3" y="484.25" font-size="3.2" fill="#6a6a6a" text-anchor="end">[1]</text>
<line x1="676" y1="489.2" x2="685.5" y2="489.2" stroke="#7a7a7a" stroke-width="0.8"/>
<text x="680.5" y="488.09999999999997" font-size="3.2" fill="#6a6a6a" text-anchor="middle">L28</text>
<line x1="617.5" y1="489.2" x2="676" y2="489.2" stroke="#7a7a7a" stroke-width="0.8"/>
<path d="M611.5,486.7 L617.5,486.7 L617.5,491.7 L611.5,491.7 L609.5,489.2 Z" stroke="#7a7a7a" stroke-width="0.8" fill="none"/>
<text x="608.0" y="490.5" font-size="3.2" fill="#6a6a6a" text-anchor="end">CCIR_MCLK</text>
<text x="585.1" y="490.2" font-size="3.2" fill="#6a6a6a" text-anchor="end">[1]</text>
<line x1="676" y1="495.15000000000003" x2="685.5" y2="495.15000000000003" stroke="#7a7a7a" stroke-width="0.8"/>
<text x="680.5" y="494.05" font-size="3.2" fill="#6a6a6a" text-anchor="middle">L29</text>
<line x1="617.5" y1="495.15000000000003" x2="676" y2="495.15000000000003" stroke="#7a7a7a" stroke-width="0.8"/>
<path d="M611.5,492.65000000000003 L617.5,492.65000000000003 L617.5,497.65000000000003 L611.5,497.65000000000003 L609.5,495.15000000000003 Z" stroke="#7a7a7a" stroke-width="0.8" fill="none"/>
<text x="608.0" y="496.45000000000005" font-size="3.2" fill="#6a6a6a" text-anchor="end">CCIR_RST</text>
<text x="587.2" y="496.15000000000003" font-size="3.2" fill="#6a6a6a" text-anchor="end">[1]</text>
<line x1="676" y1="501.1" x2="685.5" y2="501.1" stroke="#7a7a7a" stroke-width="0.8"/>
<text x="680.5" y="500.0" font-size="3.2" fill="#6a6a6a" text-anchor="middle">G23</text>
<line x1="617.5" y1="501.1" x2="676" y2="501.1" stroke="#7a7a7a" stroke-width="0.8"/>
<path d="M611.5,498.6 L617.5,498.6 L617.5,503.6 L611.5,503.6 L609.5,501.1 Z" stroke="#7a7a7a" stroke-width="0.8" fill="none"/>
<text x="608.0" y="502.40000000000003" font-size="3.2" fill="#6a6a6a" text-anchor="end">CCIR_PWDNB</text>
<text x="583.0" y="502.1" font-size="3.2" fill="#6a6a6a" text-anchor="end">[1]</text>
<line x1="676" y1="507.05" x2="685.5" y2="507.05" stroke="#7a7a7a" stroke-width="0.8"/>
<text x="680.5" y="505.95" font-size="3.2" fill="#6a6a6a" text-anchor="middle">N28</text>
<line x1="617.5" y1="507.05" x2="676" y2="507.05" stroke="#7a7a7a" stroke-width="0.8"/>
<path d="M611.5,504.55 L617.5,504.55 L617.5,509.55 L611.5,509.55 L609.5,507.05 Z" stroke="#7a7a7a" stroke-width="0.8" fill="none"/>
<text x="608.0" y="508.35" font-size="3.2" fill="#6a6a6a" text-anchor="end">CCIR_PWDN1</text>
<text x="583.0" y="508.05" font-size="3.2" fill="#6a6a6a" text-anchor="end">[1]</text>
<line x1="676" y1="517.3" x2="685.5" y2="517.3" stroke="#7a7a7a" stroke-width="0.8"/>
<text x="680.5" y="516.1999999999999" font-size="3.2" fill="#6a6a6a" text-anchor="middle">G21</text>
<line x1="617.5" y1="517.3" x2="676" y2="517.3" stroke="#7a7a7a" stroke-width="0.8"/>
<path d="M611.5,514.8 L617.5,514.8 L617.5,519.8 L611.5,519.8 L609.5,517.3 Z" stroke="#7a7a7a" stroke-width="0.8" fill="none"/>
<text x="608.0" y="518.5999999999999" font-size="3.2" fill="#6a6a6a" text-anchor="end">LCD_RSTB</text>
<text x="587.2" y="518.3" font-size="3.2" fill="#6a6a6a" text-anchor="end">[1]</text>
<line x1="676" y1="523.15" x2="685.5" y2="523.15" stroke="#7a7a7a" stroke-width="0.8"/>
<text x="680.5" y="522.05" font-size="3.2" fill="#6a6a6a" text-anchor="middle">K08</text>
<line x1="676" y1="529.0" x2="685.5" y2="529.0" stroke="#7a7a7a" stroke-width="0.8"/>
<text x="680.5" y="527.9" font-size="3.2" fill="#6a6a6a" text-anchor="middle">R03</text>
<line x1="676" y1="534.8499999999999" x2="685.5" y2="534.8499999999999" stroke="#7a7a7a" stroke-width="0.8"/>
<text x="680.5" y="533.7499999999999" font-size="3.2" fill="#6a6a6a" text-anchor="middle">F08</text>
<line x1="676" y1="540.6999999999999" x2="685.5" y2="540.6999999999999" stroke="#7a7a7a" stroke-width="0.8"/>
<text x="680.5" y="539.5999999999999" font-size="3.2" fill="#6a6a6a" text-anchor="middle">G21</text>
<line x1="617.5" y1="540.6999999999999" x2="676" y2="540.6999999999999" stroke="#7a7a7a" stroke-width="0.8"/>
<path d="M611.5,538.1999999999999 L617.5,538.1999999999999 L617.5,543.1999999999999 L611.5,543.1999999999999 L609.5,540.6999999999999 Z" stroke="#7a7a7a" stroke-width="0.8" fill="none"/>
<text x="608.0" y="541.9999999999999" font-size="3.2" fill="#6a6a6a" text-anchor="end">LCD_FMARK</text>
<text x="585.1" y="541.6999999999999" font-size="3.2" fill="#6a6a6a" text-anchor="end">[1]</text>
<line x1="676" y1="552.8" x2="685.5" y2="552.8" stroke="#7a7a7a" stroke-width="0.8"/>
<text x="680.5" y="551.6999999999999" font-size="3.2" fill="#6a6a6a" text-anchor="middle">L25</text>
<line x1="617.5" y1="552.8" x2="676" y2="552.8" stroke="#7a7a7a" stroke-width="0.8"/>
<path d="M611.5,550.3 L617.5,550.3 L617.5,555.3 L611.5,555.3 L609.5,552.8 Z" stroke="#7a7a7a" stroke-width="0.8" fill="none"/>
<text x="608.0" y="554.0999999999999" font-size="3.2" fill="#6a6a6a" text-anchor="end">MIPI_DATAP0</text>
<text x="580.9" y="553.8" font-size="3.2" fill="#6a6a6a" text-anchor="end">[1]</text>
<line x1="676" y1="558.8" x2="685.5" y2="558.8" stroke="#7a7a7a" stroke-width="0.8"/>
<text x="680.5" y="557.6999999999999" font-size="3.2" fill="#6a6a6a" text-anchor="middle">G08</text>
<line x1="617.5" y1="558.8" x2="676" y2="558.8" stroke="#7a7a7a" stroke-width="0.8"/>
<path d="M611.5,556.3 L617.5,556.3 L617.5,561.3 L611.5,561.3 L609.5,558.8 Z" stroke="#7a7a7a" stroke-width="0.8" fill="none"/>
<text x="608.0" y="560.0999999999999" font-size="3.2" fill="#6a6a6a" text-anchor="end">MIPI_DATAP0</text>
<text x="580.9" y="559.8" font-size="3.2" fill="#6a6a6a" text-anchor="end">[1]</text>
<line x1="676" y1="566.8" x2="685.5" y2="566.8" stroke="#7a7a7a" stroke-width="0.8"/>
<text x="680.5" y="565.6999999999999" font-size="3.2" fill="#6a6a6a" text-anchor="middle">B07</text>
<line x1="617.5" y1="566.8" x2="676" y2="566.8" stroke="#7a7a7a" stroke-width="0.8"/>
<path d="M611.5,564.3 L617.5,564.3 L617.5,569.3 L611.5,569.3 L609.5,566.8 Z" stroke="#7a7a7a" stroke-width="0.8" fill="none"/>
<text x="608.0" y="568.0999999999999" font-size="3.2" fill="#6a6a6a" text-anchor="end">MIPI_DATAP0</text>
<text x="580.9" y="567.8" font-size="3.2" fill="#6a6a6a" text-anchor="end">[1]</text>
<line x1="676" y1="572.8" x2="685.5" y2="572.8" stroke="#7a7a7a" stroke-width="0.8"/>
<text x="680.5" y="571.6999999999999" font-size="3.2" fill="#6a6a6a" text-anchor="middle">K04</text>
<line x1="617.5" y1="572.8" x2="676" y2="572.8" stroke="#7a7a7a" stroke-width="0.8"/>
<path d="M611.5,570.3 L617.5,570.3 L617.5,575.3 L611.5,575.3 L609.5,572.8 Z" stroke="#7a7a7a" stroke-width="0.8" fill="none"/>
<text x="608.0" y="574.0999999999999" font-size="3.2" fill="#6a6a6a" text-anchor="end">MIPI_DATAP0</text>
<text x="580.9" y="573.8" font-size="3.2" fill="#6a6a6a" text-anchor="end">[1]</text>
<line x1="676" y1="580.8" x2="685.5" y2="580.8" stroke="#7a7a7a" stroke-width="0.8"/>
<text x="680.5" y="579.6999999999999" font-size="3.2" fill="#6a6a6a" text-anchor="middle">R09</text>
<line x1="617.5" y1="580.8" x2="676" y2="580.8" stroke="#7a7a7a" stroke-width="0.8"/>
<path d="M611.5,578.3 L617.5,578.3 L617.5,583.3 L611.5,583.3 L609.5,580.8 Z" stroke="#7a7a7a" stroke-width="0.8" fill="none"/>
<text x="608.0" y="582.0999999999999" font-size="3.2" fill="#6a6a6a" text-anchor="end">MIPI_DATAP0</text>
<text x="580.9" y="581.8" font-size="3.2" fill="#6a6a6a" text-anchor="end">[1]</text>
<line x1="676" y1="586.8" x2="685.5" y2="586.8" stroke="#7a7a7a" stroke-width="0.8"/>
<text x="680.5" y="585.6999999999999" font-size="3.2" fill="#6a6a6a" text-anchor="middle">D07</text>
<line x1="617.5" y1="586.8" x2="676" y2="586.8" stroke="#7a7a7a" stroke-width="0.8"/>
<path d="M611.5,584.3 L617.5,584.3 L617.5,589.3 L611.5,589.3 L609.5,586.8 Z" stroke="#7a7a7a" stroke-width="0.8" fill="none"/>
<text x="608.0" y="588.0999999999999" font-size="3.2" fill="#6a6a6a" text-anchor="end">MIPI_DATAP0</text>
<text x="580.9" y="587.8" font-size="3.2" fill="#6a6a6a" text-anchor="end">[1]</text>
<line x1="676" y1="594.4" x2="685.5" y2="594.4" stroke="#7a7a7a" stroke-width="0.8"/>
<text x="680.5" y="593.3" font-size="3.2" fill="#6a6a6a" text-anchor="middle">F09</text>
<line x1="617.5" y1="594.4" x2="676" y2="594.4" stroke="#7a7a7a" stroke-width="0.8"/>
<path d="M611.5,591.9 L617.5,591.9 L617.5,596.9 L611.5,596.9 L609.5,594.4 Z" stroke="#7a7a7a" stroke-width="0.8" fill="none"/>
<text x="608.0" y="595.6999999999999" font-size="3.2" fill="#6a6a6a" text-anchor="end">MIPI_DATAP0</text>
<text x="580.9" y="595.4" font-size="3.2" fill="#6a6a6a" text-anchor="end">[1]</text>
<line x1="676" y1="600.8" x2="685.5" y2="600.8" stroke="#7a7a7a" stroke-width="0.8"/>
<text x="680.5" y="599.6999999999999" font-size="3.2" fill="#6a6a6a" text-anchor="middle">L28</text>
<line x1="617.5" y1="600.8" x2="676" y2="600.8" stroke="#7a7a7a" stroke-width="0.8"/>
<path d="M611.5,598.3 L617.5,598.3 L617.5,603.3 L611.5,603.3 L609.5,600.8 Z" stroke="#7a7a7a" stroke-width="0.8" fill="none"/>
<text x="608.0" y="602.0999999999999" font-size="3.2" fill="#6a6a6a" text-anchor="end">MIPI_DATAP0</text>
<text x="580.9" y="601.8" font-size="3.2" fill="#6a6a6a" text-anchor="end">[1]</text>
<line x1="676" y1="609.0" x2="685.5" y2="609.0" stroke="#7a7a7a" stroke-width="0.8"/>
<text x="680.5" y="607.9" font-size="3.2" fill="#6a6a6a" text-anchor="middle">K04</text>
<line x1="617.5" y1="609.0" x2="676" y2="609.0" stroke="#7a7a7a" stroke-width="0.8"/>
<path d="M611.5,606.5 L617.5,606.5 L617.5,611.5 L611.5,611.5 L609.5,609.0 Z" stroke="#7a7a7a" stroke-width="0.8" fill="none"/>
<text x="608.0" y="610.3" font-size="3.2" fill="#6a6a6a" text-anchor="end">MIPI_DATAP0</text>
<text x="580.9" y="610.0" font-size="3.2" fill="#6a6a6a" text-anchor="end">[1]</text>
<line x1="676" y1="615.3" x2="685.5" y2="615.3" stroke="#7a7a7a" stroke-width="0.8"/>
<text x="680.5" y="614.1999999999999" font-size="3.2" fill="#6a6a6a" text-anchor="middle">L25</text>
<line x1="617.5" y1="615.3" x2="676" y2="615.3" stroke="#7a7a7a" stroke-width="0.8"/>
<path d="M611.5,612.8 L617.5,612.8 L617.5,617.8 L611.5,617.8 L609.5,615.3 Z" stroke="#7a7a7a" stroke-width="0.8" fill="none"/>
<text x="608.0" y="616.5999999999999" font-size="3.2" fill="#6a6a6a" text-anchor="end">MIPI_DATAP0</text>
<text x="580.9" y="616.3" font-size="3.2" fill="#6a6a6a" text-anchor="end">[1]</text>
<line x1="676" y1="620.2" x2="685.5" y2="620.2" stroke="#7a7a7a" stroke-width="0.8"/>
<text x="680.5" y="619.1" font-size="3.2" fill="#6a6a6a" text-anchor="middle">H10</text>
<line x1="633" y1="620.2" x2="676" y2="620.2" stroke="#7a7a7a" stroke-width="0.8"/>
<path d="M651,620.2 l1.5,-2.5 l2.3,5 l2.3,-5 l2.3,5 l2.3,-5 l2.3,5 l1.3,-2.5" stroke="#7a7a7a" stroke-width="0.7" fill="none"/>
<text x="640" y="618.7" font-size="3" fill="#6a6a6a" text-anchor="start">R611</text>
<line x1="630.5" y1="616.7" x2="630.5" y2="623.7" stroke="#7a7a7a" stroke-width="0.8"/>
<line x1="632.5" y1="616.7" x2="632.5" y2="623.7" stroke="#7a7a7a" stroke-width="0.8"/>
<line x1="676" y1="628.9" x2="685.5" y2="628.9" stroke="#7a7a7a" stroke-width="0.8"/>
<text x="680.5" y="627.8" font-size="3.2" fill="#6a6a6a" text-anchor="middle">D07</text>
<line x1="617.5" y1="628.9" x2="676" y2="628.9" stroke="#7a7a7a" stroke-width="0.8"/>
<path d="M611.5,626.4 L617.5,626.4 L617.5,631.4 L611.5,631.4 L609.5,628.9 Z" stroke="#7a7a7a" stroke-width="0.8" fill="none"/>
<text x="608.0" y="630.1999999999999" font-size="3.2" fill="#6a6a6a" text-anchor="end">MIPI_DATAP0</text>
<text x="580.9" y="629.9" font-size="3.2" fill="#6a6a6a" text-anchor="end">[1]</text>
<line x1="676" y1="636.4" x2="685.5" y2="636.4" stroke="#7a7a7a" stroke-width="0.8"/>
<text x="680.5" y="635.3" font-size="3.2" fill="#6a6a6a" text-anchor="middle">E22</text>
<line x1="617.5" y1="636.4" x2="676" y2="636.4" stroke="#7a7a7a" stroke-width="0.8"/>
<path d="M611.5,633.9 L617.5,633.9 L617.5,638.9 L611.5,638.9 L609.5,636.4 Z" stroke="#7a7a7a" stroke-width="0.8" fill="none"/>
<text x="608.0" y="637.6999999999999" font-size="3.2" fill="#6a6a6a" text-anchor="end">MIPI_DATAP0</text>
<text x="580.9" y="637.4" font-size="3.2" fill="#6a6a6a" text-anchor="end">[1]</text>
<line x1="676" y1="643.9" x2="685.5" y2="643.9" stroke="#7a7a7a" stroke-width="0.8"/>
<text x="680.5" y="642.8" font-size="3.2" fill="#6a6a6a" text-anchor="middle">E22</text>
<line x1="617.5" y1="643.9" x2="676" y2="643.9" stroke="#7a7a7a" stroke-width="0.8"/>
<path d="M611.5,641.4 L617.5,641.4 L617.5,646.4 L611.5,646.4 L609.5,643.9 Z" stroke="#7a7a7a" stroke-width="0.8" fill="none"/>
<text x="608.0" y="645.1999999999999" font-size="3.2" fill="#6a6a6a" text-anchor="end">MIPI_DATAP0</text>
<text x="580.9" y="644.9" font-size="3.2" fill="#6a6a6a" text-anchor="end">[1]</text>
<line x1="676" y1="650.4" x2="685.5" y2="650.4" stroke="#7a7a7a" stroke-width="0.8"/>
<text x="680.5" y="649.3" font-size="3.2" fill="#6a6a6a" text-anchor="middle">J08</text>
<line x1="617.5" y1="650.4" x2="676" y2="650.4" stroke="#7a7a7a" stroke-width="0.8"/>
<path d="M611.5,647.9 L617.5,647.9 L617.5,652.9 L611.5,652.9 L609.5,650.4 Z" stroke="#7a7a7a" stroke-width="0.8" fill="none"/>
<text x="608.0" y="651.6999999999999" font-size="3.2" fill="#6a6a6a" text-anchor="end">MIPI_DATAP0</text>
<text x="580.9" y="651.4" font-size="3.2" fill="#6a6a6a" text-anchor="end">[1]</text>
<line x1="676" y1="658.0" x2="685.5" y2="658.0" stroke="#7a7a7a" stroke-width="0.8"/>
<text x="680.5" y="656.9" font-size="3.2" fill="#6a6a6a" text-anchor="middle">F08</text>
<line x1="617.5" y1="658.0" x2="676" y2="658.0" stroke="#7a7a7a" stroke-width="0.8"/>
<path d="M611.5,655.5 L617.5,655.5 L617.5,660.5 L611.5,660.5 L609.5,658.0 Z" stroke="#7a7a7a" stroke-width="0.8" fill="none"/>
<text x="608.0" y="659.3" font-size="3.2" fill="#6a6a6a" text-anchor="end">MIPI_DATAP0</text>
<text x="580.9" y="659.0" font-size="3.2" fill="#6a6a6a" text-anchor="end">[1]</text>
<line x1="676" y1="664.9" x2="685.5" y2="664.9" stroke="#7a7a7a" stroke-width="0.8"/>
<text x="680.5" y="663.8" font-size="3.2" fill="#6a6a6a" text-anchor="middle">D07</text>
<line x1="617.5" y1="664.9" x2="676" y2="664.9" stroke="#7a7a7a" stroke-width="0.8"/>
<path d="M611.5,662.4 L617.5,662.4 L617.5,667.4 L611.5,667.4 L609.5,664.9 Z" stroke="#7a7a7a" stroke-width="0.8" fill="none"/>
<text x="608.0" y="666.1999999999999" font-size="3.2" fill="#6a6a6a" text-anchor="end">MIPI_DATAP0</text>
<text x="580.9" y="665.9" font-size="3.2" fill="#6a6a6a" text-anchor="end">[1]</text>
<line x1="676" y1="669.4" x2="685.5" y2="669.4" stroke="#7a7a7a" stroke-width="0.8"/>
<text x="680.5" y="668.3" font-size="3.2" fill="#6a6a6a" text-anchor="middle">G21</text>
<line x1="633" y1="669.4" x2="676" y2="669.4" stroke="#7a7a7a" stroke-width="0.8"/>
<path d="M651,669.4 l1.5,-2.5 l2.3,5 l2.3,-5 l2.3,5 l2.3,-5 l2.3,5 l1.3,-2.5" stroke="#7a7a7a" stroke-width="0.7" fill="none"/>
<text x="640" y="667.9" font-size="3" fill="#6a6a6a" text-anchor="start">R611</text>
<line x1="630.5" y1="665.9" x2="630.5" y2="672.9" stroke="#7a7a7a" stroke-width="0.8"/>
<line x1="632.5" y1="665.9" x2="632.5" y2="672.9" stroke="#7a7a7a" stroke-width="0.8"/>
<line x1="676" y1="677.4" x2="685.5" y2="677.4" stroke="#7a7a7a" stroke-width="0.8"/>
<text x="680.5" y="676.3" font-size="3.2" fill="#6a6a6a" text-anchor="middle">K27</text>
<line x1="617.5" y1="677.4" x2="676" y2="677.4" stroke="#7a7a7a" stroke-width="0.8"/>
<path d="M611.5,674.9 L617.5,674.9 L617.5,679.9 L611.5,679.9 L609.5,677.4 Z" stroke="#7a7a7a" stroke-width="0.8" fill="none"/>
<text x="608.0" y="678.6999999999999" font-size="3.2" fill="#6a6a6a" text-anchor="end">MIPI_DATAP0</text>
<text x="580.9" y="678.4" font-size="3.2" fill="#6a6a6a" text-anchor="end">[1]</text>
<line x1="676" y1="683.8" x2="685.5" y2="683.8" stroke="#7a7a7a" stroke-width="0.8"/>
<text x="680.5" y="682.6999999999999" font-size="3.2" fill="#6a6a6a" text-anchor="middle">B07</text>
<line x1="617.5" y1="683.8" x2="676" y2="683.8" stroke="#7a7a7a" stroke-width="0.8"/>
<path d="M611.5,681.3 L617.5,681.3 L617.5,686.3 L611.5,686.3 L609.5,683.8 Z" stroke="#7a7a7a" stroke-width="0.8" fill="none"/>
<text x="608.0" y="685.0999999999999" font-size="3.2" fill="#6a6a6a" text-anchor="end">MIPI_DATAP0</text>
<text x="580.9" y="684.8" font-size="3.2" fill="#6a6a6a" text-anchor="end">[1]</text>
<line x1="676" y1="691.4" x2="685.5" y2="691.4" stroke="#7a7a7a" stroke-width="0.8"/>
<text x="680.5" y="690.3" font-size="3.2" fill="#6a6a6a" text-anchor="middle">L25</text>
<line x1="617.5" y1="691.4" x2="676" y2="691.4" stroke="#7a7a7a" stroke-width="0.8"/>
<path d="M611.5,688.9 L617.5,688.9 L617.5,693.9 L611.5,693.9 L609.5,691.4 Z" stroke="#7a7a7a" stroke-width="0.8" fill="none"/>
<text x="608.0" y="692.6999999999999" font-size="3.2" fill="#6a6a6a" text-anchor="end">MIPI_DATAP0</text>
<text x="580.9" y="692.4" font-size="3.2" fill="#6a6a6a" text-anchor="end">[1]</text>
<line x1="676" y1="698.3" x2="685.5" y2="698.3" stroke="#7a7a7a" stroke-width="0.8"/>
<text x="680.5" y="697.1999999999999" font-size="3.2" fill="#6a6a6a" text-anchor="middle">G23</text>
<line x1="617.5" y1="698.3" x2="676" y2="698.3" stroke="#7a7a7a" stroke-width="0.8"/>
<path d="M611.5,695.8 L617.5,695.8 L617.5,700.8 L611.5,700.8 L609.5,698.3 Z" stroke="#7a7a7a" stroke-width="0.8" fill="none"/>
<text x="608.0" y="699.5999999999999" font-size="3.2" fill="#6a6a6a" text-anchor="end">MIPI_DATAP0</text>
<text x="580.9" y="699.3" font-size="3.2" fill="#6a6a6a" text-anchor="end">[1]</text>
<line x1="676" y1="705.8" x2="685.5" y2="705.8" stroke="#7a7a7a" stroke-width="0.8"/>
<text x="680.5" y="704.6999999999999" font-size="3.2" fill="#6a6a6a" text-anchor="middle">G21</text>
<line x1="617.5" y1="705.8" x2="676" y2="705.8" stroke="#7a7a7a" stroke-width="0.8"/>
<path d="M611.5,703.3 L617.5,703.3 L617.5,708.3 L611.5,708.3 L609.5,705.8 Z" stroke="#7a7a7a" stroke-width="0.8" fill="none"/>
<text x="608.0" y="707.0999999999999" font-size="3.2" fill="#6a6a6a" text-anchor="end">MIPI_DATAP0</text>
<text x="580.9" y="706.8" font-size="3.2" fill="#6a6a6a" text-anchor="end">[1]</text>
<line x1="676" y1="712.3" x2="685.5" y2="712.3" stroke="#7a7a7a" stroke-width="0.8"/>
<text x="680.5" y="711.1999999999999" font-size="3.2" fill="#6a6a6a" text-anchor="middle">H10</text>
<line x1="617.5" y1="712.3" x2="676" y2="712.3" stroke="#7a7a7a" stroke-width="0.8"/>
<path d="M611.5,709.8 L617.5,709.8 L617.5,714.8 L611.5,714.8 L609.5,712.3 Z" stroke="#7a7a7a" stroke-width="0.8" fill="none"/>
<text x="608.0" y="713.5999999999999" font-size="3.2" fill="#6a6a6a" text-anchor="end">MIPI_DATAP0</text>
<text x="580.9" y="713.3" font-size="3.2" fill="#6a6a6a" text-anchor="end">[1]</text>
<line x1="676" y1="717.7" x2="685.5" y2="717.7" stroke="#7a7a7a" stroke-width="0.8"/>
<text x="680.5" y="716.6" font-size="3.2" fill="#6a6a6a" text-anchor="middle">B05</text>
<line x1="633" y1="717.7" x2="676" y2="717.7" stroke="#7a7a7a" stroke-width="0.8"/>
<path d="M651,717.7 l1.5,-2.5 l2.3,5 l2.3,-5 l2.3,5 l2.3,-5 l2.3,5 l1.3,-2.5" stroke="#7a7a7a" stroke-width="0.7" fill="none"/>
<text x="640" y="716.2" font-size="3" fill="#6a6a6a" text-anchor="start">R611</text>
<line x1="630.5" y1="714.2" x2="630.5" y2="721.2" stroke="#7a7a7a" stroke-width="0.8"/>
<line x1="632.5" y1="714.2" x2="632.5" y2="721.2" stroke="#7a7a7a" stroke-width="0.8"/>
<circle cx="624" cy="428.6" r="1.8" fill="none" stroke="#7a7a7a" stroke-width="0.8"/>
<text x="624" y="425" font-size="3" fill="#6a6a6a" text-anchor="middle">POWER_1V8</text>
<line x1="624" y1="430.5" x2="624" y2="477.3" stroke="#7a7a7a" stroke-width="0.8"/>
<line x1="624" y1="437" x2="632" y2="437" stroke="#7a7a7a" stroke-width="0.8"/>
<line x1="632" y1="437" x2="632" y2="483.3" stroke="#7a7a7a" stroke-width="0.8"/>
<path d="M624,450 l2,1 l-4,2 l4,2 l-4,2 l4,2 l-4,2 l2,1" stroke="#7a7a7a" stroke-width="0.7" fill="none"/>
<path d="M632,450 l2,1 l-4,2 l4,2 l-4,2 l4,2 l-4,2 l2,1" stroke="#7a7a7a" stroke-width="0.7" fill="none"/>
<circle cx="624" cy="437" r="0.9" fill="#333"/><circle cx="624" cy="477.3" r="0.9" fill="#333"/><circle cx="632" cy="483.3" r="0.9" fill="#333"/>
<line x1="893.5" y1="250.9" x2="905" y2="250.9" stroke="#7a7a7a" stroke-width="0.8"/>
<text x="899.5" y="249.8" font-size="3.2" fill="#6a6a6a" text-anchor="middle">B05</text>
<line x1="905" y1="250.9" x2="966" y2="250.9" stroke="#7a7a7a" stroke-width="0.8"/>
<path d="M966,248.4 L972,248.4 L974,250.9 L972,253.4 L966,253.4 Z" stroke="#7a7a7a" stroke-width="0.8" fill="none"/>
<text x="977" y="252.4" font-size="3.2" fill="#6a6a6a" text-anchor="start">SDIO_CLK</text>
<text x="999.0" y="251.9" font-size="3.2" fill="#6a6a6a" text-anchor="start">[1]</text>
<line x1="893.5" y1="256.7" x2="905" y2="256.7" stroke="#7a7a7a" stroke-width="0.8"/>
<text x="899.5" y="255.6" font-size="3.2" fill="#6a6a6a" text-anchor="middle">R03</text>
<line x1="893.5" y1="262.8" x2="905" y2="262.8" stroke="#7a7a7a" stroke-width="0.8"/>
<text x="899.5" y="261.7" font-size="3.2" fill="#6a6a6a" text-anchor="middle">G08</text>
<line x1="905" y1="262.8" x2="958" y2="262.8" stroke="#7a7a7a" stroke-width="0.8"/>
<path d="M958,260.3 L964,260.3 L966,262.8 L964,265.3 L958,265.3 Z" stroke="#7a7a7a" stroke-width="0.8" fill="none"/>
<text x="969" y="264.3" font-size="3.2" fill="#6a6a6a" text-anchor="start">SDIO_CMD</text>
<text x="991.0" y="263.8" font-size="3.2" fill="#6a6a6a" text-anchor="start">[1]</text>
<line x1="893.5" y1="268.8" x2="905" y2="268.8" stroke="#7a7a7a" stroke-width="0.8"/>
<text x="899.5" y="267.7" font-size="3.2" fill="#6a6a6a" text-anchor="middle">K04</text>
<line x1="905" y1="268.8" x2="958" y2="268.8" stroke="#7a7a7a" stroke-width="0.8"/>
<path d="M958,266.3 L964,266.3 L966,268.8 L964,271.3 L958,271.3 Z" stroke="#7a7a7a" stroke-width="0.8" fill="none"/>
<text x="969" y="270.3" font-size="3.2" fill="#6a6a6a" text-anchor="start">SDIO_D0</text>
<text x="989.0" y="269.8" font-size="3.2" fill="#6a6a6a" text-anchor="start">[1]</text>
<line x1="893.5" y1="274.8" x2="905" y2="274.8" stroke="#7a7a7a" stroke-width="0.8"/>
<text x="899.5" y="273.7" font-size="3.2" fill="#6a6a6a" text-anchor="middle">K08</text>
<line x1="905" y1="274.8" x2="957" y2="274.8" stroke="#7a7a7a" stroke-width="0.8"/>
<path d="M957,272.3 L963,272.3 L965,274.8 L963,277.3 L957,277.3 Z" stroke="#7a7a7a" stroke-width="0.8" fill="none"/>
<text x="968" y="276.3" font-size="3.2" fill="#6a6a6a" text-anchor="start">SDIO_D1</text>
<text x="988.0" y="275.8" font-size="3.2" fill="#6a6a6a" text-anchor="start">[1]</text>
<line x1="893.5" y1="280.7" x2="905" y2="280.7" stroke="#7a7a7a" stroke-width="0.8"/>
<text x="899.5" y="279.59999999999997" font-size="3.2" fill="#6a6a6a" text-anchor="middle">R05</text>
<line x1="905" y1="280.7" x2="957" y2="280.7" stroke="#7a7a7a" stroke-width="0.8"/>
<path d="M957,278.2 L963,278.2 L965,280.7 L963,283.2 L957,283.2 Z" stroke="#7a7a7a" stroke-width="0.8" fill="none"/>
<text x="968" y="282.2" font-size="3.2" fill="#6a6a6a" text-anchor="start">SDIO_D2</text>
<text x="988.0" y="281.7" font-size="3.2" fill="#6a6a6a" text-anchor="start">[1]</text>
<line x1="893.5" y1="286.8" x2="905" y2="286.8" stroke="#7a7a7a" stroke-width="0.8"/>
<text x="899.5" y="285.7" font-size="3.2" fill="#6a6a6a" text-anchor="middle">B05</text>
<line x1="905" y1="286.8" x2="957" y2="286.8" stroke="#7a7a7a" stroke-width="0.8"/>
<path d="M957,284.3 L963,284.3 L965,286.8 L963,289.3 L957,289.3 Z" stroke="#7a7a7a" stroke-width="0.8" fill="none"/>
<text x="968" y="288.3" font-size="3.2" fill="#6a6a6a" text-anchor="start">SDIO_D3</text>
<text x="988.0" y="287.8" font-size="3.2" fill="#6a6a6a" text-anchor="start">[1]</text>
<line x1="893.5" y1="300.90000000000003" x2="905" y2="300.90000000000003" stroke="#7a7a7a" stroke-width="0.8"/>
<text x="899.5" y="299.8" font-size="3.2" fill="#6a6a6a" text-anchor="middle">N28</text>
<line x1="905" y1="300.90000000000003" x2="955" y2="300.90000000000003" stroke="#7a7a7a" stroke-width="0.8"/>
<path d="M955,298.40000000000003 L961,298.40000000000003 L963,300.90000000000003 L961,303.40000000000003 L955,303.40000000000003 Z" stroke="#7a7a7a" stroke-width="0.8" fill="none"/>
<text x="966" y="302.40000000000003" font-size="3.2" fill="#6a6a6a" text-anchor="start">W_ADC2</text>
<text x="984.0" y="301.90000000000003" font-size="3.2" fill="#6a6a6a" text-anchor="start">[1]</text>
<line x1="893.5" y1="306.8" x2="905" y2="306.8" stroke="#7a7a7a" stroke-width="0.8"/>
<text x="899.5" y="305.7" font-size="3.2" fill="#6a6a6a" text-anchor="middle">B09</text>
<line x1="905" y1="306.8" x2="955" y2="306.8" stroke="#7a7a7a" stroke-width="0.8"/>
<path d="M955,304.3 L961,304.3 L963,306.8 L961,309.3 L955,309.3 Z" stroke="#7a7a7a" stroke-width="0.8" fill="none"/>
<text x="966" y="308.3" font-size="3.2" fill="#6a6a6a" text-anchor="start">PW_EN_A</text>
<text x="986.0" y="307.8" font-size="3.2" fill="#6a6a6a" text-anchor="start">[1]</text>
<line x1="893.5" y1="312.6" x2="905" y2="312.6" stroke="#7a7a7a" stroke-width="0.8"/>
<text x="899.5" y="311.5" font-size="3.2" fill="#6a6a6a" text-anchor="middle">D07</text>
<line x1="905" y1="312.6" x2="955" y2="312.6" stroke="#7a7a7a" stroke-width="0.8"/>
<path d="M955,310.1 L961,310.1 L963,312.6 L961,315.1 L955,315.1 Z" stroke="#7a7a7a" stroke-width="0.8" fill="none"/>
<text x="966" y="314.1" font-size="3.2" fill="#6a6a6a" text-anchor="start">WW_EN_B</text>
<text x="986.0" y="313.6" font-size="3.2" fill="#6a6a6a" text-anchor="start">[1]</text>
<line x1="893.5" y1="318.40000000000003" x2="905" y2="318.40000000000003" stroke="#7a7a7a" stroke-width="0.8"/>
<text x="899.5" y="317.3" font-size="3.2" fill="#6a6a6a" text-anchor="middle">F09</text>
<line x1="905" y1="318.40000000000003" x2="955" y2="318.40000000000003" stroke="#7a7a7a" stroke-width="0.8"/>
<path d="M955,315.90000000000003 L961,315.90000000000003 L963,318.40000000000003 L961,320.90000000000003 L955,320.90000000000003 Z" stroke="#7a7a7a" stroke-width="0.8" fill="none"/>
<text x="966" y="319.90000000000003" font-size="3.2" fill="#6a6a6a" text-anchor="start">GPS_D</text>
<text x="982.0" y="319.40000000000003" font-size="3.2" fill="#6a6a6a" text-anchor="start">[1]</text>
<line x1="893.5" y1="324.2" x2="905" y2="324.2" stroke="#7a7a7a" stroke-width="0.8"/>
<text x="899.5" y="323.09999999999997" font-size="3.2" fill="#6a6a6a" text-anchor="middle">B05</text>
<line x1="893.5" y1="330.3" x2="905" y2="330.3" stroke="#7a7a7a" stroke-width="0.8"/>
<text x="899.5" y="329.2" font-size="3.2" fill="#6a6a6a" text-anchor="middle">R07</text>
<line x1="893.5" y1="340.0" x2="905" y2="340.0" stroke="#7a7a7a" stroke-width="0.8"/>
<text x="899.5" y="338.9" font-size="3.2" fill="#6a6a6a" text-anchor="middle">G21</text>
<line x1="905" y1="340.0" x2="956" y2="340.0" stroke="#7a7a7a" stroke-width="0.8"/>
<path d="M956,337.5 L962,337.5 L964,340.0 L962,342.5 L956,342.5 Z" stroke="#7a7a7a" stroke-width="0.8" fill="none"/>
<text x="967" y="341.5" font-size="3.2" fill="#6a6a6a" text-anchor="start">SIM0_CLK</text>
<text x="989.0" y="341.0" font-size="3.2" fill="#6a6a6a" text-anchor="start">[1]</text>
<line x1="893.5" y1="345.8" x2="905" y2="345.8" stroke="#7a7a7a" stroke-width="0.8"/>
<text x="899.5" y="344.7" font-size="3.2" fill="#6a6a6a" text-anchor="middle">L25</text>
<line x1="905" y1="345.8" x2="956" y2="345.8" stroke="#7a7a7a" stroke-width="0.8"/>
<path d="M956,343.3 L962,343.3 L964,345.8 L962,348.3 L956,348.3 Z" stroke="#7a7a7a" stroke-width="0.8" fill="none"/>
<text x="967" y="347.3" font-size="3.2" fill="#6a6a6a" text-anchor="start">SIM0_DA</text>
<text x="987.0" y="346.8" font-size="3.2" fill="#6a6a6a" text-anchor="start">[1]</text>
<line x1="893.5" y1="352.2" x2="905" y2="352.2" stroke="#7a7a7a" stroke-width="0.8"/>
<text x="899.5" y="351.09999999999997" font-size="3.2" fill="#6a6a6a" text-anchor="middle">L29</text>
<line x1="905" y1="352.2" x2="956" y2="352.2" stroke="#7a7a7a" stroke-width="0.8"/>
<path d="M956,349.7 L962,349.7 L964,352.2 L962,354.7 L956,354.7 Z" stroke="#7a7a7a" stroke-width="0.8" fill="none"/>
<text x="967" y="353.7" font-size="3.2" fill="#6a6a6a" text-anchor="start">SIM0_RST</text>
<text x="989.0" y="353.2" font-size="3.2" fill="#6a6a6a" text-anchor="start">[1]</text>
<line x1="893.5" y1="360.3" x2="905" y2="360.3" stroke="#7a7a7a" stroke-width="0.8"/>
<text x="899.5" y="359.2" font-size="3.2" fill="#6a6a6a" text-anchor="middle">K27</text>
<line x1="905" y1="360.3" x2="956" y2="360.3" stroke="#7a7a7a" stroke-width="0.8"/>
<path d="M956,357.8 L962,357.8 L964,360.3 L962,362.8 L956,362.8 Z" stroke="#7a7a7a" stroke-width="0.8" fill="none"/>
<text x="967" y="361.8" font-size="3.2" fill="#6a6a6a" text-anchor="start">SIM1_CLK</text>
<text x="989.0" y="361.3" font-size="3.2" fill="#6a6a6a" text-anchor="start">[1]</text>
<line x1="893.5" y1="366.1" x2="905" y2="366.1" stroke="#7a7a7a" stroke-width="0.8"/>
<text x="899.5" y="365.0" font-size="3.2" fill="#6a6a6a" text-anchor="middle">B05</text>
<line x1="905" y1="366.1" x2="956" y2="366.1" stroke="#7a7a7a" stroke-width="0.8"/>
<path d="M956,363.6 L962,363.6 L964,366.1 L962,368.6 L956,368.6 Z" stroke="#7a7a7a" stroke-width="0.8" fill="none"/>
<text x="967" y="367.6" font-size="3.2" fill="#6a6a6a" text-anchor="start">SIM1_DA</text>
<text x="987.0" y="367.1" font-size="3.2" fill="#6a6a6a" text-anchor="start">[1]</text>
<line x1="893.5" y1="372.2" x2="905" y2="372.2" stroke="#7a7a7a" stroke-width="0.8"/>
<text x="899.5" y="371.09999999999997" font-size="3.2" fill="#6a6a6a" text-anchor="middle">G08</text>
<line x1="905" y1="372.2" x2="956" y2="372.2" stroke="#7a7a7a" stroke-width="0.8"/>
<path d="M956,369.7 L962,369.7 L964,372.2 L962,374.7 L956,374.7 Z" stroke="#7a7a7a" stroke-width="0.8" fill="none"/>
<text x="967" y="373.7" font-size="3.2" fill="#6a6a6a" text-anchor="start">SIM1_RST</text>
<text x="989.0" y="373.2" font-size="3.2" fill="#6a6a6a" text-anchor="start">[1]</text>
<line x1="893.5" y1="380.1" x2="905" y2="380.1" stroke="#7a7a7a" stroke-width="0.8"/>
<text x="899.5" y="379.0" font-size="3.2" fill="#6a6a6a" text-anchor="middle">D07</text>
<line x1="905" y1="380.1" x2="1089" y2="380.1" stroke="#7a7a7a" stroke-width="0.8"/>
<path d="M1089,377.6 L1095,377.6 L1097,380.1 L1095,382.6 L1089,382.6 Z" stroke="#7a7a7a" stroke-width="0.8" fill="none"/>
<text x="1100" y="381.6" font-size="3.2" fill="#6a6a6a" text-anchor="start">SCL0</text>
<text x="1114.0" y="381.1" font-size="3.2" fill="#6a6a6a" text-anchor="start">[1]</text>
<line x1="893.5" y1="385.90000000000003" x2="905" y2="385.90000000000003" stroke="#7a7a7a" stroke-width="0.8"/>
<text x="899.5" y="384.8" font-size="3.2" fill="#6a6a6a" text-anchor="middle">R05</text>
<line x1="905" y1="385.90000000000003" x2="1089" y2="385.90000000000003" stroke="#7a7a7a" stroke-width="0.8"/>
<path d="M1089,383.40000000000003 L1095,383.40000000000003 L1097,385.90000000000003 L1095,388.40000000000003 L1089,388.40000000000003 Z" stroke="#7a7a7a" stroke-width="0.8" fill="none"/>
<text x="1100" y="387.40000000000003" font-size="3.2" fill="#6a6a6a" text-anchor="start">SDA0</text>
<text x="1114.0" y="386.90000000000003" font-size="3.2" fill="#6a6a6a" text-anchor="start">[1]</text>
<line x1="893.5" y1="392.2" x2="905" y2="392.2" stroke="#7a7a7a" stroke-width="0.8"/>
<text x="899.5" y="391.09999999999997" font-size="3.2" fill="#6a6a6a" text-anchor="middle">G28</text>
<line x1="893.5" y1="399.8" x2="905" y2="399.8" stroke="#7a7a7a" stroke-width="0.8"/>
<text x="899.5" y="398.7" font-size="3.2" fill="#6a6a6a" text-anchor="middle">R03</text>
<line x1="893.5" y1="405.7" x2="905" y2="405.7" stroke="#7a7a7a" stroke-width="0.8"/>
<text x="899.5" y="404.59999999999997" font-size="3.2" fill="#6a6a6a" text-anchor="middle">R03</text>
<line x1="905" y1="405.7" x2="946" y2="405.7" stroke="#7a7a7a" stroke-width="0.8"/>
<path d="M946,403.2 L952,403.2 L954,405.7 L952,408.2 L946,408.2 Z" stroke="#7a7a7a" stroke-width="0.8" fill="none"/>
<text x="957" y="407.2" font-size="3.2" fill="#6a6a6a" text-anchor="start">CTP_RST</text>
<text x="977.0" y="406.7" font-size="3.2" fill="#6a6a6a" text-anchor="start">[1]</text>
<line x1="893.5" y1="411.5" x2="905" y2="411.5" stroke="#7a7a7a" stroke-width="0.8"/>
<text x="899.5" y="410.4" font-size="3.2" fill="#6a6a6a" text-anchor="middle">K25</text>
<line x1="905" y1="411.5" x2="946" y2="411.5" stroke="#7a7a7a" stroke-width="0.8"/>
<path d="M946,409.0 L952,409.0 L954,411.5 L952,414.0 L946,414.0 Z" stroke="#7a7a7a" stroke-width="0.8" fill="none"/>
<text x="957" y="413.0" font-size="3.2" fill="#6a6a6a" text-anchor="start">GPIO76_VTG_EN</text>
<text x="989.0" y="412.5" font-size="3.2" fill="#6a6a6a" text-anchor="start">[1]</text>
<line x1="893.5" y1="417.3" x2="905" y2="417.3" stroke="#7a7a7a" stroke-width="0.8"/>
<text x="899.5" y="416.2" font-size="3.2" fill="#6a6a6a" text-anchor="middle">R03</text>
<line x1="905" y1="417.3" x2="946" y2="417.3" stroke="#7a7a7a" stroke-width="0.8"/>
<path d="M946,414.8 L952,414.8 L954,417.3 L952,419.8 L946,419.8 Z" stroke="#7a7a7a" stroke-width="0.8" fill="none"/>
<text x="957" y="418.8" font-size="3.2" fill="#6a6a6a" text-anchor="start">CTP_INT</text>
<text x="977.0" y="418.3" font-size="3.2" fill="#6a6a6a" text-anchor="start">[1]</text>
<line x1="893.5" y1="425.90000000000003" x2="905" y2="425.90000000000003" stroke="#7a7a7a" stroke-width="0.8"/>
<text x="899.5" y="424.8" font-size="3.2" fill="#6a6a6a" text-anchor="middle">F09</text>
<line x1="893.5" y1="431.6" x2="905" y2="431.6" stroke="#7a7a7a" stroke-width="0.8"/>
<text x="899.5" y="430.5" font-size="3.2" fill="#6a6a6a" text-anchor="middle">K08</text>
<line x1="893.5" y1="441.6" x2="905" y2="441.6" stroke="#7a7a7a" stroke-width="0.8"/>
<text x="899.5" y="440.5" font-size="3.2" fill="#6a6a6a" text-anchor="middle">K04</text>
<line x1="905" y1="441.6" x2="1098" y2="441.6" stroke="#7a7a7a" stroke-width="0.8"/>
<path d="M1098,439.1 L1104,439.1 L1106,441.6 L1104,444.1 L1098,444.1 Z" stroke="#7a7a7a" stroke-width="0.8" fill="none"/>
<text x="1109" y="443.1" font-size="3.2" fill="#6a6a6a" text-anchor="start">SCL1_SCL</text>
<text x="1131.0" y="442.6" font-size="3.2" fill="#6a6a6a" text-anchor="start">[1]</text>
<line x1="893.5" y1="447.5" x2="905" y2="447.5" stroke="#7a7a7a" stroke-width="0.8"/>
<text x="899.5" y="446.4" font-size="3.2" fill="#6a6a6a" text-anchor="middle">G23</text>
<line x1="905" y1="447.5" x2="1098" y2="447.5" stroke="#7a7a7a" stroke-width="0.8"/>
<path d="M1098,445.0 L1104,445.0 L1106,447.5 L1104,450.0 L1098,450.0 Z" stroke="#7a7a7a" stroke-width="0.8" fill="none"/>
<text x="1109" y="449.0" font-size="3.2" fill="#6a6a6a" text-anchor="start">SCL1_SDA</text>
<text x="1131.0" y="448.5" font-size="3.2" fill="#6a6a6a" text-anchor="start">[1]</text>
<line x1="893.5" y1="455.3" x2="905" y2="455.3" stroke="#7a7a7a" stroke-width="0.8"/>
<text x="899.5" y="454.2" font-size="3.2" fill="#6a6a6a" text-anchor="middle">R05</text>
<line x1="905" y1="455.3" x2="1100" y2="455.3" stroke="#7a7a7a" stroke-width="0.8"/>
<path d="M1100,452.8 L1106,452.8 L1108,455.3 L1106,457.8 L1100,457.8 Z" stroke="#7a7a7a" stroke-width="0.8" fill="none"/>
<text x="1111" y="456.8" font-size="3.2" fill="#6a6a6a" text-anchor="start">SCL3_SCL</text>
<text x="1133.0" y="456.3" font-size="3.2" fill="#6a6a6a" text-anchor="start">[1]</text>
<line x1="893.5" y1="461.5" x2="905" y2="461.5" stroke="#7a7a7a" stroke-width="0.8"/>
<text x="899.5" y="460.4" font-size="3.2" fill="#6a6a6a" text-anchor="middle">N28</text>
<line x1="905" y1="461.5" x2="1100" y2="461.5" stroke="#7a7a7a" stroke-width="0.8"/>
<path d="M1100,459.0 L1106,459.0 L1108,461.5 L1106,464.0 L1100,464.0 Z" stroke="#7a7a7a" stroke-width="0.8" fill="none"/>
<text x="1111" y="463.0" font-size="3.2" fill="#6a6a6a" text-anchor="start">SCL3_SDA</text>
<text x="1133.0" y="462.5" font-size="3.2" fill="#6a6a6a" text-anchor="start">[1]</text>
<path d="M926,250.9 l2,-3 l2.5,6 l2.5,-6 l2.5,6 l2.5,-6 l1.5,3" stroke="#7a7a7a" stroke-width="0.7" fill="none"/>
<text x="919" y="248" font-size="3" fill="#6a6a6a" text-anchor="start">R600</text>
<line x1="893.5" y1="473.1" x2="905" y2="473.1" stroke="#7a7a7a" stroke-width="0.8"/>
<text x="899.5" y="472.0" font-size="3.2" fill="#6a6a6a" text-anchor="middle">G23</text>
<line x1="905" y1="473.1" x2="997" y2="473.1" stroke="#7a7a7a" stroke-width="0.8"/>
<path d="M997,470.6 L1003,470.6 L1005,473.1 L1003,475.6 L997,475.6 Z" stroke="#7a7a7a" stroke-width="0.8" fill="none"/>
<text x="1008" y="474.6" font-size="3.2" fill="#6a6a6a" text-anchor="start">PR_DATA</text>
<text x="1028.0" y="474.1" font-size="3.2" fill="#6a6a6a" text-anchor="start">[1]</text>
<line x1="893.5" y1="479.40000000000003" x2="905" y2="479.40000000000003" stroke="#7a7a7a" stroke-width="0.8"/>
<text x="899.5" y="478.3" font-size="3.2" fill="#6a6a6a" text-anchor="middle">L29</text>
<line x1="905" y1="479.40000000000003" x2="997" y2="479.40000000000003" stroke="#7a7a7a" stroke-width="0.8"/>
<path d="M997,476.90000000000003 L1003,476.90000000000003 L1005,479.40000000000003 L1003,481.90000000000003 L997,481.90000000000003 Z" stroke="#7a7a7a" stroke-width="0.8" fill="none"/>
<text x="1008" y="480.90000000000003" font-size="3.2" fill="#6a6a6a" text-anchor="start">PR_DATA</text>
<text x="1028.0" y="480.40000000000003" font-size="3.2" fill="#6a6a6a" text-anchor="start">[1]</text>
<line x1="893.5" y1="485.2" x2="905" y2="485.2" stroke="#7a7a7a" stroke-width="0.8"/>
<text x="899.5" y="484.09999999999997" font-size="3.2" fill="#6a6a6a" text-anchor="middle">N28</text>
<line x1="905" y1="485.2" x2="997" y2="485.2" stroke="#7a7a7a" stroke-width="0.8"/>
<path d="M997,482.7 L1003,482.7 L1005,485.2 L1003,487.7 L997,487.7 Z" stroke="#7a7a7a" stroke-width="0.8" fill="none"/>
<text x="1008" y="486.7" font-size="3.2" fill="#6a6a6a" text-anchor="start">PR_DATA</text>
<text x="1028.0" y="486.2" font-size="3.2" fill="#6a6a6a" text-anchor="start">[1]</text>
<line x1="893.5" y1="490.90000000000003" x2="905" y2="490.90000000000003" stroke="#7a7a7a" stroke-width="0.8"/>
<text x="899.5" y="489.8" font-size="3.2" fill="#6a6a6a" text-anchor="middle">G08</text>
<line x1="905" y1="490.90000000000003" x2="997" y2="490.90000000000003" stroke="#7a7a7a" stroke-width="0.8"/>
<path d="M997,488.40000000000003 L1003,488.40000000000003 L1005,490.90000000000003 L1003,493.40000000000003 L997,493.40000000000003 Z" stroke="#7a7a7a" stroke-width="0.8" fill="none"/>
<text x="1008" y="492.40000000000003" font-size="3.2" fill="#6a6a6a" text-anchor="start">PR_DATA</text>
<text x="1028.0" y="491.90000000000003" font-size="3.2" fill="#6a6a6a" text-anchor="start">[1]</text>
<line x1="893.5" y1="497.2" x2="905" y2="497.2" stroke="#7a7a7a" stroke-width="0.8"/>
<text x="899.5" y="496.09999999999997" font-size="3.2" fill="#6a6a6a" text-anchor="middle">B09</text>
<line x1="905" y1="497.2" x2="997" y2="497.2" stroke="#7a7a7a" stroke-width="0.8"/>
<path d="M997,494.7 L1003,494.7 L1005,497.2 L1003,499.7 L997,499.7 Z" stroke="#7a7a7a" stroke-width="0.8" fill="none"/>
<text x="1008" y="498.7" font-size="3.2" fill="#6a6a6a" text-anchor="start">PR_DATA</text>
<text x="1028.0" y="498.2" font-size="3.2" fill="#6a6a6a" text-anchor="start">[1]</text>
<line x1="893.5" y1="503.1" x2="905" y2="503.1" stroke="#7a7a7a" stroke-width="0.8"/>
<text x="899.5" y="502.0" font-size="3.2" fill="#6a6a6a" text-anchor="middle">G21</text>
<line x1="905" y1="503.1" x2="997" y2="503.1" stroke="#7a7a7a" stroke-width="0.8"/>
<path d="M997,500.6 L1003,500.6 L1005,503.1 L1003,505.6 L997,505.6 Z" stroke="#7a7a7a" stroke-width="0.8" fill="none"/>
<text x="1008" y="504.6" font-size="3.2" fill="#6a6a6a" text-anchor="start">PR_DATA</text>
<text x="1028.0" y="504.1" font-size="3.2" fill="#6a6a6a" text-anchor="start">[1]</text>
<line x1="893.5" y1="508.7" x2="905" y2="508.7" stroke="#7a7a7a" stroke-width="0.8"/>
<text x="899.5" y="507.59999999999997" font-size="3.2" fill="#6a6a6a" text-anchor="middle">D07</text>
<line x1="905" y1="508.7" x2="997" y2="508.7" stroke="#7a7a7a" stroke-width="0.8"/>
<path d="M997,506.2 L1003,506.2 L1005,508.7 L1003,511.2 L997,511.2 Z" stroke="#7a7a7a" stroke-width="0.8" fill="none"/>
<text x="1008" y="510.2" font-size="3.2" fill="#6a6a6a" text-anchor="start">PR_DATA</text>
<text x="1028.0" y="509.7" font-size="3.2" fill="#6a6a6a" text-anchor="start">[1]</text>
<line x1="893.5" y1="515.0" x2="905" y2="515.0" stroke="#7a7a7a" stroke-width="0.8"/>
<text x="899.5" y="513.9" font-size="3.2" fill="#6a6a6a" text-anchor="middle">B07</text>
<line x1="905" y1="515.0" x2="997" y2="515.0" stroke="#7a7a7a" stroke-width="0.8"/>
<path d="M997,512.5 L1003,512.5 L1005,515.0 L1003,517.5 L997,517.5 Z" stroke="#7a7a7a" stroke-width="0.8" fill="none"/>
<text x="1008" y="516.5" font-size="3.2" fill="#6a6a6a" text-anchor="start">PR_DATA</text>
<text x="1028.0" y="516.0" font-size="3.2" fill="#6a6a6a" text-anchor="start">[1]</text>
<line x1="893.5" y1="521.3" x2="905" y2="521.3" stroke="#7a7a7a" stroke-width="0.8"/>
<text x="899.5" y="520.1999999999999" font-size="3.2" fill="#6a6a6a" text-anchor="middle">R03</text>
<line x1="905" y1="521.3" x2="997" y2="521.3" stroke="#7a7a7a" stroke-width="0.8"/>
<path d="M997,518.8 L1003,518.8 L1005,521.3 L1003,523.8 L997,523.8 Z" stroke="#7a7a7a" stroke-width="0.8" fill="none"/>
<text x="1008" y="522.8" font-size="3.2" fill="#6a6a6a" text-anchor="start">PR_DATA</text>
<text x="1028.0" y="522.3" font-size="3.2" fill="#6a6a6a" text-anchor="start">[1]</text>
<line x1="893.5" y1="527.1999999999999" x2="905" y2="527.1999999999999" stroke="#7a7a7a" stroke-width="0.8"/>
<text x="899.5" y="526.0999999999999" font-size="3.2" fill="#6a6a6a" text-anchor="middle">G28</text>
<line x1="905" y1="527.1999999999999" x2="997" y2="527.1999999999999" stroke="#7a7a7a" stroke-width="0.8"/>
<path d="M997,524.6999999999999 L1003,524.6999999999999 L1005,527.1999999999999 L1003,529.6999999999999 L997,529.6999999999999 Z" stroke="#7a7a7a" stroke-width="0.8" fill="none"/>
<text x="1008" y="528.6999999999999" font-size="3.2" fill="#6a6a6a" text-anchor="start">PR_DATA</text>
<text x="1028.0" y="528.1999999999999" font-size="3.2" fill="#6a6a6a" text-anchor="start">[1]</text>
<line x1="893.5" y1="534.3" x2="905" y2="534.3" stroke="#7a7a7a" stroke-width="0.8"/>
<text x="899.5" y="533.1999999999999" font-size="3.2" fill="#6a6a6a" text-anchor="middle">N08</text>
<line x1="905" y1="534.3" x2="961" y2="534.3" stroke="#7a7a7a" stroke-width="0.8"/>
<path d="M961,531.8 L967,531.8 L969,534.3 L967,536.8 L961,536.8 Z" stroke="#7a7a7a" stroke-width="0.8" fill="none"/>
<text x="972" y="535.8" font-size="3.2" fill="#6a6a6a" text-anchor="start">GPIO84_FLASH_EN</text>
<text x="1008.0" y="535.3" font-size="3.2" fill="#6a6a6a" text-anchor="start">[1]</text>
<line x1="893.5" y1="540.1999999999999" x2="905" y2="540.1999999999999" stroke="#7a7a7a" stroke-width="0.8"/>
<text x="899.5" y="539.0999999999999" font-size="3.2" fill="#6a6a6a" text-anchor="middle">G08</text>
<line x1="905" y1="540.1999999999999" x2="961" y2="540.1999999999999" stroke="#7a7a7a" stroke-width="0.8"/>
<path d="M961,537.6999999999999 L967,537.6999999999999 L969,540.1999999999999 L967,542.6999999999999 L961,542.6999999999999 Z" stroke="#7a7a7a" stroke-width="0.8" fill="none"/>
<text x="972" y="541.6999999999999" font-size="3.2" fill="#6a6a6a" text-anchor="start">GPIO85_TORCH_EN</text>
<text x="1008.0" y="541.1999999999999" font-size="3.2" fill="#6a6a6a" text-anchor="start">[1]</text>
<line x1="893.5" y1="546.5" x2="905" y2="546.5" stroke="#7a7a7a" stroke-width="0.8"/>
<text x="899.5" y="545.4" font-size="3.2" fill="#6a6a6a" text-anchor="middle">K25</text>
<line x1="905" y1="546.5" x2="961" y2="546.5" stroke="#7a7a7a" stroke-width="0.8"/>
<path d="M961,544.0 L967,544.0 L969,546.5 L967,549.0 L961,549.0 Z" stroke="#7a7a7a" stroke-width="0.8" fill="none"/>
<text x="972" y="548.0" font-size="3.2" fill="#6a6a6a" text-anchor="start">GPIO85_CHG_EN</text>
<text x="1004.0" y="547.5" font-size="3.2" fill="#6a6a6a" text-anchor="start">[1]</text>
<line x1="893.5" y1="552.3" x2="905" y2="552.3" stroke="#7a7a7a" stroke-width="0.8"/>
<text x="899.5" y="551.1999999999999" font-size="3.2" fill="#6a6a6a" text-anchor="middle">F08</text>
<line x1="893.5" y1="562.4" x2="905" y2="562.4" stroke="#7a7a7a" stroke-width="0.8"/>
<text x="899.5" y="561.3" font-size="3.2" fill="#6a6a6a" text-anchor="middle">F08</text>
<line x1="905" y1="562.4" x2="999" y2="562.4" stroke="#7a7a7a" stroke-width="0.8"/>
<path d="M999,559.9 L1005,559.9 L1007,562.4 L1005,564.9 L999,564.9 Z" stroke="#7a7a7a" stroke-width="0.8" fill="none"/>
<text x="1010" y="563.9" font-size="3.2" fill="#6a6a6a" text-anchor="start">RF_DATA</text>
<text x="1030.0" y="563.4" font-size="3.2" fill="#6a6a6a" text-anchor="start">[1]</text>
<line x1="893.5" y1="568.4" x2="905" y2="568.4" stroke="#7a7a7a" stroke-width="0.8"/>
<text x="899.5" y="567.3" font-size="3.2" fill="#6a6a6a" text-anchor="middle">K04</text>
<line x1="905" y1="568.4" x2="999" y2="568.4" stroke="#7a7a7a" stroke-width="0.8"/>
<path d="M999,565.9 L1005,565.9 L1007,568.4 L1005,570.9 L999,570.9 Z" stroke="#7a7a7a" stroke-width="0.8" fill="none"/>
<text x="1010" y="569.9" font-size="3.2" fill="#6a6a6a" text-anchor="start">RF_DATA</text>
<text x="1030.0" y="569.4" font-size="3.2" fill="#6a6a6a" text-anchor="start">[1]</text>
<line x1="893.5" y1="574.4" x2="905" y2="574.4" stroke="#7a7a7a" stroke-width="0.8"/>
<text x="899.5" y="573.3" font-size="3.2" fill="#6a6a6a" text-anchor="middle">D02</text>
<line x1="905" y1="574.4" x2="999" y2="574.4" stroke="#7a7a7a" stroke-width="0.8"/>
<path d="M999,571.9 L1005,571.9 L1007,574.4 L1005,576.9 L999,576.9 Z" stroke="#7a7a7a" stroke-width="0.8" fill="none"/>
<text x="1010" y="575.9" font-size="3.2" fill="#6a6a6a" text-anchor="start">RF_DATA</text>
<text x="1030.0" y="575.4" font-size="3.2" fill="#6a6a6a" text-anchor="start">[1]</text>
<line x1="893.5" y1="580.4" x2="905" y2="580.4" stroke="#7a7a7a" stroke-width="0.8"/>
<text x="899.5" y="579.3" font-size="3.2" fill="#6a6a6a" text-anchor="middle">B07</text>
<line x1="905" y1="580.4" x2="999" y2="580.4" stroke="#7a7a7a" stroke-width="0.8"/>
<path d="M999,577.9 L1005,577.9 L1007,580.4 L1005,582.9 L999,582.9 Z" stroke="#7a7a7a" stroke-width="0.8" fill="none"/>
<text x="1010" y="581.9" font-size="3.2" fill="#6a6a6a" text-anchor="start">RF_DATA</text>
<text x="1030.0" y="581.4" font-size="3.2" fill="#6a6a6a" text-anchor="start">[1]</text>
<line x1="893.5" y1="586.4" x2="905" y2="586.4" stroke="#7a7a7a" stroke-width="0.8"/>
<text x="899.5" y="585.3" font-size="3.2" fill="#6a6a6a" text-anchor="middle">N08</text>
<line x1="905" y1="586.4" x2="999" y2="586.4" stroke="#7a7a7a" stroke-width="0.8"/>
<path d="M999,583.9 L1005,583.9 L1007,586.4 L1005,588.9 L999,588.9 Z" stroke="#7a7a7a" stroke-width="0.8" fill="none"/>
<text x="1010" y="587.9" font-size="3.2" fill="#6a6a6a" text-anchor="start">RF_DATA</text>
<text x="1030.0" y="587.4" font-size="3.2" fill="#6a6a6a" text-anchor="start">[1]</text>
<line x1="893.5" y1="592.4" x2="905" y2="592.4" stroke="#7a7a7a" stroke-width="0.8"/>
<text x="899.5" y="591.3" font-size="3.2" fill="#6a6a6a" text-anchor="middle">B07</text>
<line x1="905" y1="592.4" x2="999" y2="592.4" stroke="#7a7a7a" stroke-width="0.8"/>
<path d="M999,589.9 L1005,589.9 L1007,592.4 L1005,594.9 L999,594.9 Z" stroke="#7a7a7a" stroke-width="0.8" fill="none"/>
<text x="1010" y="593.9" font-size="3.2" fill="#6a6a6a" text-anchor="start">RF_DATA</text>
<text x="1030.0" y="593.4" font-size="3.2" fill="#6a6a6a" text-anchor="start">[1]</text>
<line x1="893.5" y1="598.4" x2="905" y2="598.4" stroke="#7a7a7a" stroke-width="0.8"/>
<text x="899.5" y="597.3" font-size="3.2" fill="#6a6a6a" text-anchor="middle">R05</text>
<line x1="905" y1="598.4" x2="999" y2="598.4" stroke="#7a7a7a" stroke-width="0.8"/>
<path d="M999,595.9 L1005,595.9 L1007,598.4 L1005,600.9 L999,600.9 Z" stroke="#7a7a7a" stroke-width="0.8" fill="none"/>
<text x="1010" y="599.9" font-size="3.2" fill="#6a6a6a" text-anchor="start">RF_DATA</text>
<text x="1030.0" y="599.4" font-size="3.2" fill="#6a6a6a" text-anchor="start">[1]</text>
<line x1="893.5" y1="604.4" x2="905" y2="604.4" stroke="#7a7a7a" stroke-width="0.8"/>
<text x="899.5" y="603.3" font-size="3.2" fill="#6a6a6a" text-anchor="middle">L29</text>
<line x1="905" y1="604.4" x2="999" y2="604.4" stroke="#7a7a7a" stroke-width="0.8"/>
<path d="M999,601.9 L1005,601.9 L1007,604.4 L1005,606.9 L999,606.9 Z" stroke="#7a7a7a" stroke-width="0.8" fill="none"/>
<text x="1010" y="605.9" font-size="3.2" fill="#6a6a6a" text-anchor="start">RF_DATA</text>
<text x="1030.0" y="605.4" font-size="3.2" fill="#6a6a6a" text-anchor="start">[1]</text>
<line x1="893.5" y1="610.4" x2="905" y2="610.4" stroke="#7a7a7a" stroke-width="0.8"/>
<text x="899.5" y="609.3" font-size="3.2" fill="#6a6a6a" text-anchor="middle">K25</text>
<line x1="893.5" y1="616.4" x2="905" y2="616.4" stroke="#7a7a7a" stroke-width="0.8"/>
<text x="899.5" y="615.3" font-size="3.2" fill="#6a6a6a" text-anchor="middle">N28</text>
<line x1="893.5" y1="622.4" x2="905" y2="622.4" stroke="#7a7a7a" stroke-width="0.8"/>
<text x="899.5" y="621.3" font-size="3.2" fill="#6a6a6a" text-anchor="middle">D07</text>
<line x1="905" y1="622.4" x2="997" y2="622.4" stroke="#7a7a7a" stroke-width="0.8"/>
<path d="M997,619.9 L1003,619.9 L1005,622.4 L1003,624.9 L997,624.9 Z" stroke="#7a7a7a" stroke-width="0.8" fill="none"/>
<text x="1008" y="623.9" font-size="3.2" fill="#6a6a6a" text-anchor="start">CTP_INT</text>
<text x="1028.0" y="623.4" font-size="3.2" fill="#6a6a6a" text-anchor="start">[1]</text>
<line x1="893.5" y1="628.4" x2="905" y2="628.4" stroke="#7a7a7a" stroke-width="0.8"/>
<text x="899.5" y="627.3" font-size="3.2" fill="#6a6a6a" text-anchor="middle">L26</text>
<line x1="905" y1="628.4" x2="997" y2="628.4" stroke="#7a7a7a" stroke-width="0.8"/>
<path d="M997,625.9 L1003,625.9 L1005,628.4 L1003,630.9 L997,630.9 Z" stroke="#7a7a7a" stroke-width="0.8" fill="none"/>
<text x="1008" y="629.9" font-size="3.2" fill="#6a6a6a" text-anchor="start">CTP_INT</text>
<text x="1028.0" y="629.4" font-size="3.2" fill="#6a6a6a" text-anchor="start">[1]</text>
<line x1="893.5" y1="635.6999999999999" x2="905" y2="635.6999999999999" stroke="#7a7a7a" stroke-width="0.8"/>
<text x="899.5" y="634.5999999999999" font-size="3.2" fill="#6a6a6a" text-anchor="middle">R05</text>
<line x1="893.5" y1="641.9" x2="905" y2="641.9" stroke="#7a7a7a" stroke-width="0.8"/>
<text x="899.5" y="640.8" font-size="3.2" fill="#6a6a6a" text-anchor="middle">L26</text>
<line x1="893.5" y1="648.0999999999999" x2="905" y2="648.0999999999999" stroke="#7a7a7a" stroke-width="0.8"/>
<text x="899.5" y="646.9999999999999" font-size="3.2" fill="#6a6a6a" text-anchor="middle">D07</text>
<line x1="893.5" y1="654.3" x2="905" y2="654.3" stroke="#7a7a7a" stroke-width="0.8"/>
<text x="899.5" y="653.1999999999999" font-size="3.2" fill="#6a6a6a" text-anchor="middle">R05</text>
<line x1="893.5" y1="660.4999999999999" x2="905" y2="660.4999999999999" stroke="#7a7a7a" stroke-width="0.8"/>
<text x="899.5" y="659.3999999999999" font-size="3.2" fill="#6a6a6a" text-anchor="middle">L29</text>
<line x1="893.5" y1="668.6999999999999" x2="905" y2="668.6999999999999" stroke="#7a7a7a" stroke-width="0.8"/>
<text x="899.5" y="667.5999999999999" font-size="3.2" fill="#6a6a6a" text-anchor="middle">N28</text>
<line x1="905" y1="668.6999999999999" x2="982" y2="668.6999999999999" stroke="#7a7a7a" stroke-width="0.8"/>
<path d="M982,666.1999999999999 L988,666.1999999999999 L990,668.6999999999999 L988,671.1999999999999 L982,671.1999999999999 Z" stroke="#7a7a7a" stroke-width="0.8" fill="none"/>
<text x="993" y="670.1999999999999" font-size="3.2" fill="#6a6a6a" text-anchor="start">KEYIN0</text>
<text x="1011.0" y="669.6999999999999" font-size="3.2" fill="#6a6a6a" text-anchor="start">[1]</text>
<line x1="893.5" y1="674.4" x2="905" y2="674.4" stroke="#7a7a7a" stroke-width="0.8"/>
<text x="899.5" y="673.3" font-size="3.2" fill="#6a6a6a" text-anchor="middle">R03</text>
<line x1="893.5" y1="680.0999999999999" x2="905" y2="680.0999999999999" stroke="#7a7a7a" stroke-width="0.8"/>
<text x="899.5" y="678.9999999999999" font-size="3.2" fill="#6a6a6a" text-anchor="middle">F09</text>
<line x1="893.5" y1="685.8" x2="905" y2="685.8" stroke="#7a7a7a" stroke-width="0.8"/>
<text x="899.5" y="684.6999999999999" font-size="3.2" fill="#6a6a6a" text-anchor="middle">B07</text>
<line x1="905" y1="685.8" x2="982" y2="685.8" stroke="#7a7a7a" stroke-width="0.8"/>
<path d="M982,683.3 L988,683.3 L990,685.8 L988,688.3 L982,688.3 Z" stroke="#7a7a7a" stroke-width="0.8" fill="none"/>
<text x="993" y="687.3" font-size="3.2" fill="#6a6a6a" text-anchor="start">KEYIN0</text>
<text x="1011.0" y="686.8" font-size="3.2" fill="#6a6a6a" text-anchor="start">[1]</text>
<line x1="893.5" y1="691.4999999999999" x2="905" y2="691.4999999999999" stroke="#7a7a7a" stroke-width="0.8"/>
<text x="899.5" y="690.3999999999999" font-size="3.2" fill="#6a6a6a" text-anchor="middle">G28</text>
<line x1="905" y1="691.4999999999999" x2="982" y2="691.4999999999999" stroke="#7a7a7a" stroke-width="0.8"/>
<path d="M982,688.9999999999999 L988,688.9999999999999 L990,691.4999999999999 L988,693.9999999999999 L982,693.9999999999999 Z" stroke="#7a7a7a" stroke-width="0.8" fill="none"/>
<text x="993" y="692.9999999999999" font-size="3.2" fill="#6a6a6a" text-anchor="start">KEYIN0</text>
<text x="1011.0" y="692.4999999999999" font-size="3.2" fill="#6a6a6a" text-anchor="start">[1]</text>
<line x1="893.5" y1="697.1999999999999" x2="905" y2="697.1999999999999" stroke="#7a7a7a" stroke-width="0.8"/>
<text x="899.5" y="696.0999999999999" font-size="3.2" fill="#6a6a6a" text-anchor="middle">N28</text>
<line x1="893.5" y1="705.8" x2="905" y2="705.8" stroke="#7a7a7a" stroke-width="0.8"/>
<text x="899.5" y="704.6999999999999" font-size="3.2" fill="#6a6a6a" text-anchor="middle">K08</text>
<line x1="905" y1="705.8" x2="984" y2="705.8" stroke="#7a7a7a" stroke-width="0.8"/>
<path d="M984,703.3 L990,703.3 L992,705.8 L990,708.3 L984,708.3 Z" stroke="#7a7a7a" stroke-width="0.8" fill="none"/>
<text x="995" y="707.3" font-size="3.2" fill="#6a6a6a" text-anchor="start">EINT0_SD_DET</text>
<text x="1025.0" y="706.8" font-size="3.2" fill="#6a6a6a" text-anchor="start">[1]</text>
<line x1="893.5" y1="711.5" x2="905" y2="711.5" stroke="#7a7a7a" stroke-width="0.8"/>
<text x="899.5" y="710.4" font-size="3.2" fill="#6a6a6a" text-anchor="middle">L25</text>
<line x1="905" y1="711.5" x2="984" y2="711.5" stroke="#7a7a7a" stroke-width="0.8"/>
<path d="M984,709.0 L990,709.0 L992,711.5 L990,714.0 L984,714.0 Z" stroke="#7a7a7a" stroke-width="0.8" fill="none"/>
<text x="995" y="713.0" font-size="3.2" fill="#6a6a6a" text-anchor="start">EINT1_SPK</text>
<text x="1019.0" y="712.5" font-size="3.2" fill="#6a6a6a" text-anchor="start">[1]</text>
<line x1="893.5" y1="719.6999999999999" x2="905" y2="719.6999999999999" stroke="#7a7a7a" stroke-width="0.8"/>
<text x="899.5" y="718.5999999999999" font-size="3.2" fill="#6a6a6a" text-anchor="middle">K04</text>
<rect x="1053" y="319" width="4" height="4" fill="none" stroke="#7a7a7a" stroke-width="0.8"/>
<text x="1055" y="317" font-size="3" fill="#6a6a6a" text-anchor="middle">VDDIO</text>
<line x1="1055" y1="323" x2="1055" y2="380.1" stroke="#7a7a7a" stroke-width="0.8"/>
<line x1="1055" y1="333" x2="1067" y2="333" stroke="#7a7a7a" stroke-width="0.8"/>
<line x1="1067" y1="333" x2="1067" y2="385.9" stroke="#7a7a7a" stroke-width="0.8"/>
<path d="M1055,345 l2.5,1 l-5,2.2 l5,2.2 l-5,2.2 l5,2.2 l-5,2.2 l2.5,1" stroke="#7a7a7a" stroke-width="0.7" fill="none"/>
<text x="1054" y="369" font-size="3" fill="#6a6a6a" text-anchor="start" transform="rotate(-90 1054 369)">4K7</text>
<path d="M1067,345 l2.5,1 l-5,2.2 l5,2.2 l-5,2.2 l5,2.2 l-5,2.2 l2.5,1" stroke="#7a7a7a" stroke-width="0.7" fill="none"/>
<text x="1066" y="369" font-size="3" fill="#6a6a6a" text-anchor="start" transform="rotate(-90 1066 369)">4K7</text>
<circle cx="1055" cy="333" r="1" fill="#222"/><circle cx="1055" cy="380.1" r="1" fill="#222"/><circle cx="1067" cy="385.9" r="1" fill="#222"/>
<rect x="1018" y="388" width="4" height="4" fill="none" stroke="#7a7a7a" stroke-width="0.8"/>
<text x="1023" y="391.5" font-size="3" fill="#6a6a6a" text-anchor="start">V1V8</text>
<line x1="1020" y1="392" x2="1020" y2="441.6" stroke="#7a7a7a" stroke-width="0.8"/>
<line x1="1020" y1="402" x2="1032" y2="402" stroke="#7a7a7a" stroke-width="0.8"/>
<line x1="1032" y1="402" x2="1032" y2="447.5" stroke="#7a7a7a" stroke-width="0.8"/>
<path d="M1020,414 l2.5,1 l-5,2.2 l5,2.2 l-5,2.2 l5,2.2 l-5,2.2 l2.5,1" stroke="#7a7a7a" stroke-width="0.7" fill="none"/>
<text x="1019" y="438" font-size="3" fill="#6a6a6a" text-anchor="start" transform="rotate(-90 1019 438)">4K7</text>
<path d="M1032,414 l2.5,1 l-5,2.2 l5,2.2 l-5,2.2 l5,2.2 l-5,2.2 l2.5,1" stroke="#7a7a7a" stroke-width="0.7" fill="none"/>
<text x="1031" y="438" font-size="3" fill="#6a6a6a" text-anchor="start" transform="rotate(-90 1031 438)">4K7</text>
<circle cx="1020" cy="402" r="1" fill="#222"/><circle cx="1020" cy="441.6" r="1" fill="#222"/><circle cx="1032" cy="447.5" r="1" fill="#222"/>
<rect x="1048" y="395" width="4" height="4" fill="none" stroke="#7a7a7a" stroke-width="0.8"/>
<text x="1053" y="398.5" font-size="3" fill="#6a6a6a" text-anchor="start">VREG</text>
<line x1="1050" y1="399" x2="1050" y2="455.3" stroke="#7a7a7a" stroke-width="0.8"/>
<line x1="1050" y1="409" x2="1062" y2="409" stroke="#7a7a7a" stroke-width="0.8"/>
<line x1="1062" y1="409" x2="1062" y2="461.5" stroke="#7a7a7a" stroke-width="0.8"/>
<path d="M1050,421 l2.5,1 l-5,2.2 l5,2.2 l-5,2.2 l5,2.2 l-5,2.2 l2.5,1" stroke="#7a7a7a" stroke-width="0.7" fill="none"/>
<text x="1049" y="445" font-size="3" fill="#6a6a6a" text-anchor="start" transform="rotate(-90 1049 445)">4K7</text>
<path d="M1062,421 l2.5,1 l-5,2.2 l5,2.2 l-5,2.2 l5,2.2 l-5,2.2 l2.5,1" stroke="#7a7a7a" stroke-width="0.7" fill="none"/>
<text x="1061" y="445" font-size="3" fill="#6a6a6a" text-anchor="start" transform="rotate(-90 1061 445)">4K7</text>
<circle cx="1050" cy="409" r="1" fill="#222"/><circle cx="1050" cy="455.3" r="1" fill="#222"/><circle cx="1062" cy="461.5" r="1" fill="#222"/>
<circle cx="1253.5" cy="469.6" r="2" fill="none" stroke="#7a7a7a" stroke-width="0.8"/>
<text x="1253" y="465" font-size="3" fill="#6a6a6a" text-anchor="middle">TP300</text>
<circle cx="1276" cy="465" r="2" fill="none" stroke="#7a7a7a" stroke-width="0.8"/>
<text x="1276" y="460.5" font-size="3" fill="#6a6a6a" text-anchor="middle">TP301</text>
<line x1="1253.5" y1="472" x2="1253.5" y2="488" stroke="#7a7a7a" stroke-width="0.8"/>
<line x1="1276" y1="467" x2="1276" y2="503.5" stroke="#7a7a7a" stroke-width="0.8"/>
<path d="M1191,485.1 L1198,485.1 L1198,490.1 L1191,490.1 Z" stroke="#7a7a7a" stroke-width="0.8" fill="none"/>
<text x="1189" y="489.1" font-size="3.2" fill="#6a6a6a" text-anchor="end">[2] BB_CLK32K</text>
<line x1="1198" y1="487.6" x2="1220" y2="487.6" stroke="#7a7a7a" stroke-width="0.8"/>
<path d="M1220,487.6 l2,-2 l2,4 l2,-4 l2,4 l2,-4 l2,4 l1,-2" stroke="#7a7a7a" stroke-width="0.7" fill="none"/>
<text x="1216" y="485.6" font-size="3" fill="#6a6a6a" text-anchor="start">R601</text>
<path d="M1191,500.8 L1198,500.8 L1198,505.8 L1191,505.8 Z" stroke="#7a7a7a" stroke-width="0.8" fill="none"/>
<text x="1189" y="504.8" font-size="3.2" fill="#6a6a6a" text-anchor="end">[3] BB_UTXD0</text>
<line x1="1198" y1="503.3" x2="1220" y2="503.3" stroke="#7a7a7a" stroke-width="0.8"/>
<path d="M1220,503.3 l2,-2 l2,4 l2,-4 l2,4 l2,-4 l2,4 l1,-2" stroke="#7a7a7a" stroke-width="0.7" fill="none"/>
<text x="1216" y="501.3" font-size="3" fill="#6a6a6a" text-anchor="start">R601</text>
<line x1="1234" y1="487.6" x2="1253.5" y2="487.6" stroke="#7a7a7a" stroke-width="0.8"/>
<line x1="1234" y1="503.3" x2="1285" y2="503.3" stroke="#7a7a7a" stroke-width="0.8"/>
<path d="M1285,500.8 L1293,500.8 L1293,505.8 L1285,505.8 Z" stroke="#7a7a7a" stroke-width="0.8" fill="none"/>
<text x="1296" y="504.5" font-size="3" fill="#6a6a6a" text-anchor="start">SBOOT [14]</text>
<circle cx="1276" cy="503.3" r="1" fill="#222"/>
<text x="1195" y="543.3" font-size="3" fill="#6a6a6a" text-anchor="middle">[11]</text>
<text x="1222" y="544.8" font-size="3" fill="#6a6a6a" text-anchor="end">PWR_KEY</text>
<path d="M1226,540.8 L1232,540.8 L1232,545.8 L1226,545.8 Z" stroke="#7a7a7a" stroke-width="0.8" fill="none"/>
<line x1="1232" y1="543.3" x2="1265" y2="543.3" stroke="#7a7a7a" stroke-width="0.8"/>
<line x1="1264" y1="540.3" x2="1264" y2="543.3" stroke="#7a7a7a" stroke-width="0.8"/>
<circle cx="1269" cy="543.3" r="2" fill="none" stroke="#7a7a7a" stroke-width="0.8"/>
<text x="1274" y="544.8" font-size="3" fill="#6a6a6a" text-anchor="start">TP302</text>
<text x="1195" y="555.4" font-size="3" fill="#6a6a6a" text-anchor="middle">[1,4]</text>
<text x="1222" y="556.9" font-size="3" fill="#6a6a6a" text-anchor="end">VBUS</text>
<path d="M1226,552.9 L1232,552.9 L1232,557.9 L1226,557.9 Z" stroke="#7a7a7a" stroke-width="0.8" fill="none"/>
<line x1="1232" y1="555.4" x2="1265" y2="555.4" stroke="#7a7a7a" stroke-width="0.8"/>
<line x1="1264" y1="552.4" x2="1264" y2="555.4" stroke="#7a7a7a" stroke-width="0.8"/>
<circle cx="1269" cy="555.4" r="2" fill="none" stroke="#7a7a7a" stroke-width="0.8"/>
<text x="1274" y="556.9" font-size="3" fill="#6a6a6a" text-anchor="start">TP303</text>
<text x="1195" y="567.3" font-size="3" fill="#6a6a6a" text-anchor="middle">[4,11]</text>
<text x="1222" y="568.8" font-size="3" fill="#6a6a6a" text-anchor="end">USB_DM</text>
<path d="M1226,564.8 L1232,564.8 L1232,569.8 L1226,569.8 Z" stroke="#7a7a7a" stroke-width="0.8" fill="none"/>
<line x1="1232" y1="567.3" x2="1265" y2="567.3" stroke="#7a7a7a" stroke-width="0.8"/>
<line x1="1264" y1="564.3" x2="1264" y2="567.3" stroke="#7a7a7a" stroke-width="0.8"/>
<circle cx="1269" cy="567.3" r="2" fill="none" stroke="#7a7a7a" stroke-width="0.8"/>
<text x="1274" y="568.8" font-size="3" fill="#6a6a6a" text-anchor="start">TP304</text>
<text x="1195" y="579" font-size="3" fill="#6a6a6a" text-anchor="middle">[4,13]</text>
<text x="1222" y="580.5" font-size="3" fill="#6a6a6a" text-anchor="end">USB_DP</text>
<path d="M1226,576.5 L1232,576.5 L1232,581.5 L1226,581.5 Z" stroke="#7a7a7a" stroke-width="0.8" fill="none"/>
<line x1="1232" y1="579" x2="1265" y2="579" stroke="#7a7a7a" stroke-width="0.8"/>
<line x1="1264" y1="576" x2="1264" y2="579" stroke="#7a7a7a" stroke-width="0.8"/>
<circle cx="1269" cy="579" r="2" fill="none" stroke="#7a7a7a" stroke-width="0.8"/>
<text x="1274" y="580.5" font-size="3" fill="#6a6a6a" text-anchor="start">TP305</text>
<text x="1195" y="591" font-size="3" fill="#6a6a6a" text-anchor="middle">[4]</text>
<text x="1222" y="592.5" font-size="3" fill="#6a6a6a" text-anchor="end">PBINT2</text>
<path d="M1226,588.5 L1232,588.5 L1232,593.5 L1226,593.5 Z" stroke="#7a7a7a" stroke-width="0.8" fill="none"/>
<line x1="1232" y1="591" x2="1265" y2="591" stroke="#7a7a7a" stroke-width="0.8"/>
<line x1="1264" y1="588" x2="1264" y2="591" stroke="#7a7a7a" stroke-width="0.8"/>
<circle cx="1269" cy="591" r="2" fill="none" stroke="#7a7a7a" stroke-width="0.8"/>
<text x="1274" y="592.5" font-size="3" fill="#6a6a6a" text-anchor="start">TP306</text>
<circle cx="1244" cy="591" r="1" fill="#222"/>
<line x1="1244" y1="591" x2="1244" y2="618" stroke="#7a7a7a" stroke-width="0.8"/>
<path d="M1241,601 L1247,601 L1244,605 Z" stroke="#7a7a7a" stroke-width="0.8" fill="#333"/>
<line x1="1241" y1="605" x2="1247" y2="605" stroke="#7a7a7a" stroke-width="0.8"/>
<line x1="1240" y1="618" x2="1248" y2="618" stroke="#7a7a7a" stroke-width="0.8"/>
<line x1="1241.5" y1="620" x2="1246.5" y2="620" stroke="#7a7a7a" stroke-width="0.6"/>
<circle cx="1269" cy="603" r="2" fill="none" stroke="#7a7a7a" stroke-width="0.8"/>
<line x1="1258" y1="603" x2="1267" y2="603" stroke="#7a7a7a" stroke-width="0.8"/>
<line x1="1258" y1="603" x2="1258" y2="618" stroke="#7a7a7a" stroke-width="0.8"/>
<line x1="1254" y1="618" x2="1262" y2="618" stroke="#7a7a7a" stroke-width="0.8"/>
<line x1="1255.5" y1="620" x2="1260.5" y2="620" stroke="#7a7a7a" stroke-width="0.6"/>
<text x="1250" y="600" font-size="3" fill="#6a6a6a" text-anchor="start">T300</text>
<line x1="752.5" y1="766.5" x2="1347.5" y2="766.5" stroke="#7a7a7a" stroke-width="1"/>
<line x1="752.5" y1="766.5" x2="752.5" y2="826.5" stroke="#7a7a7a" stroke-width="1"/>
<line x1="752.5" y1="826.5" x2="1347" y2="826.5" stroke="#a8a8a8" stroke-width="1"/>
<line x1="752.5" y1="794.5" x2="952.5" y2="794.5" stroke="#7a7a7a" stroke-width="1"/>
<line x1="752.5" y1="810.5" x2="952.5" y2="810.5" stroke="#7a7a7a" stroke-width="1"/>
<line x1="799.5" y1="794.5" x2="799.5" y2="826.5" stroke="#7a7a7a" stroke-width="1"/>
<line x1="863.5" y1="794.5" x2="863.5" y2="826.5" stroke="#7a7a7a" stroke-width="1"/>
<line x1="903.5" y1="794.5" x2="903.5" y2="826.5" stroke="#7a7a7a" stroke-width="1"/>
<line x1="952.5" y1="766.5" x2="952.5" y2="826.5" stroke="#7a7a7a" stroke-width="1"/>
<line x1="952.5" y1="794.5" x2="1347.5" y2="794.5" stroke="#7a7a7a" stroke-width="1"/>
<line x1="1154.5" y1="766.5" x2="1154.5" y2="826.5" stroke="#7a7a7a" stroke-width="1"/>
<line x1="1240.5" y1="794.5" x2="1240.5" y2="826.5" stroke="#7a7a7a" stroke-width="1"/>
<text x="756.7" y="777.4" font-size="9" fill="#1a1a1a" textLength="40.4" lengthAdjust="spacingAndGlyphs">COMPANY:</text>
<text x="756.7" y="806" font-size="9" fill="#1a1a1a" textLength="28.6" lengthAdjust="spacingAndGlyphs">DRAWN</text>
<text x="756.7" y="822.3" font-size="9" fill="#1a1a1a" textLength="35.9" lengthAdjust="spacingAndGlyphs">CHECKED</text>
<text x="868" y="806" font-size="9" fill="#1a1a1a" textLength="25.3" lengthAdjust="spacingAndGlyphs">DATED</text>
<text x="868" y="822.3" font-size="9" fill="#1a1a1a" textLength="25.3" lengthAdjust="spacingAndGlyphs">DATED</text>
<text x="807.3" y="821.5" font-size="9" fill="#1a1a1a" textLength="13.2" lengthAdjust="spacingAndGlyphs">&lt;  &gt;</text>
<text x="912.2" y="820.5" font-size="9" fill="#1a1a1a" textLength="12.3" lengthAdjust="spacingAndGlyphs">&lt;  &gt;</text>
<text x="958.1" y="784.1" font-size="9" fill="#1a1a1a" textLength="28.9" lengthAdjust="spacingAndGlyphs">MODEL:</text>
<text x="1026" y="784.1" font-size="9" fill="#1a1a1a" textLength="26.2" lengthAdjust="spacingAndGlyphs">IT1550</text>
<text x="958.5" y="815.1" font-size="9" fill="#1a1a1a" textLength="24.1" lengthAdjust="spacingAndGlyphs">TITLE:</text>
<text x="993.8" y="815.1" font-size="9" fill="#1a1a1a" textLength="59.2" lengthAdjust="spacingAndGlyphs">03_BB_DIGITAL</text>
<text x="1161.6" y="784.5" font-size="9" fill="#1a1a1a" textLength="53" lengthAdjust="spacingAndGlyphs">Modified Date:</text>
<text x="1265.5" y="784.5" font-size="9" fill="#1a1a1a" textLength="32.9" lengthAdjust="spacingAndGlyphs">2015-9-1</text>
<text x="1161" y="813.5" font-size="9" fill="#1a1a1a" textLength="36.8" lengthAdjust="spacingAndGlyphs">VERSION:</text>
<text x="1213.6" y="813.5" font-size="9" fill="#1a1a1a" textLength="16.2" lengthAdjust="spacingAndGlyphs">V0.5</text>
<text x="1247.9" y="813.5" font-size="9" fill="#1a1a1a" textLength="26.7" lengthAdjust="spacingAndGlyphs">SHEET:</text>
<text x="1285" y="813.5" font-size="9" fill="#1a1a1a" textLength="4.3" lengthAdjust="spacingAndGlyphs">3</text>
<text x="1294.2" y="813.5" font-size="9" fill="#1a1a1a" textLength="9.8" lengthAdjust="spacingAndGlyphs">OF</text>
<text x="1321.9" y="812.9" font-size="9" fill="#1a1a1a" textLength="8.4" lengthAdjust="spacingAndGlyphs">12</text>
</svg></div>
<div class="a" style="left:0;top:836px;width:1521px;height:20px;background:#41628a"></div>
<div class="a" style="left:0;top:834px;width:1521px;height:2px;background:#eef0f2"></div>
<div class="a mono" style="left:0;top:842px;color:#fff;line-height:16px">Version:1.0.0.52</div>
<div class="a mono" style="left:1362px;top:842px;color:#fff;line-height:16px">Current [IT1550 schematic]</div>
</body></html>
